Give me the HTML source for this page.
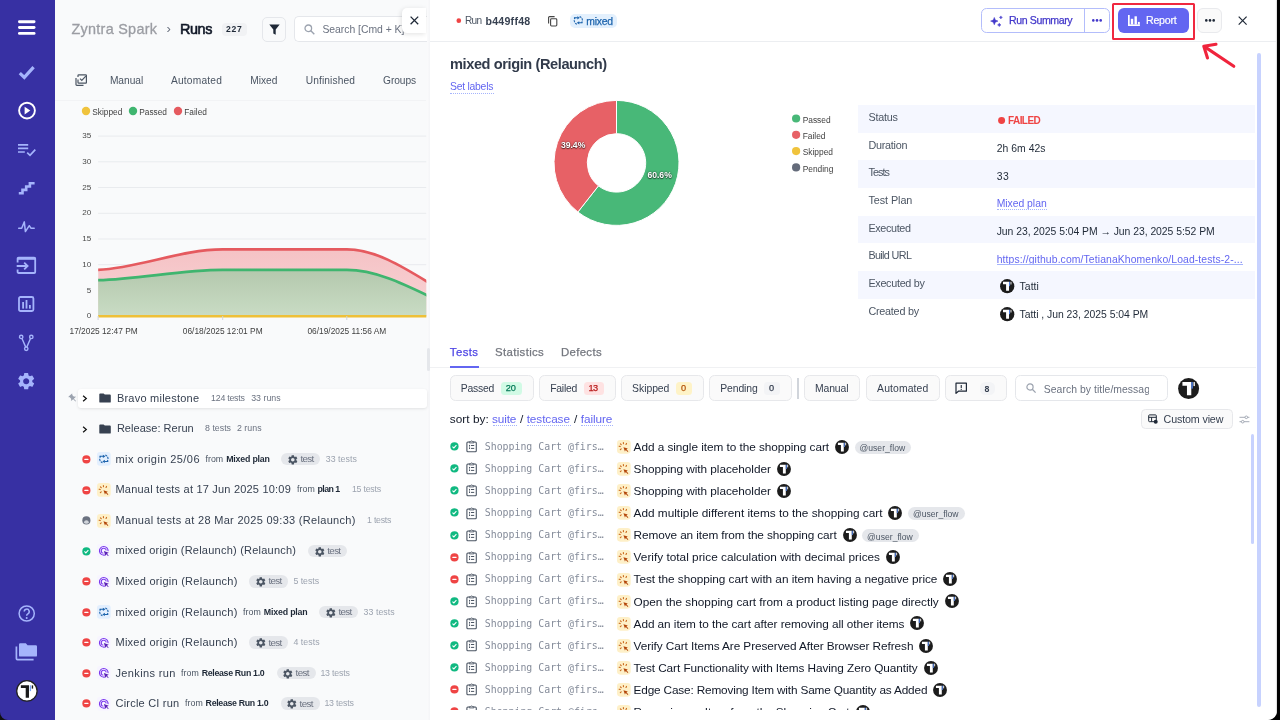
<!DOCTYPE html>
<html lang="en"><head><meta charset="utf-8"><title>Runs</title>
<style>
*{box-sizing:border-box;margin:0;padding:0}
html,body{width:1280px;height:720px;overflow:hidden;background:#fff;font-family:'Liberation Sans', sans-serif;}
#root{position:relative;width:1280px;height:720px;overflow:hidden;will-change:transform;opacity:0.999}
#root div,#root span,#root svg{position:absolute;display:block}
#root span{white-space:nowrap}
#root svg{overflow:visible}
#root span span{position:static;display:inline}
</style></head>
<body><div id="root">
<div style="left:0.00px;top:0.00px;width:55.00px;height:720.00px;background:#3730a3"></div>
<div style="left:55.00px;top:0.00px;width:375.00px;height:720.00px;background:#f9fafb"></div>
<div style="left:430.00px;top:0.00px;width:850.00px;height:720.00px;background:#fff"></div>
<div style="left:1277.20px;top:0.00px;width:2.80px;height:720.00px;background:#000;box-shadow:0 0 1.200px rgba(0,0,0,.8)"></div>
<svg style="left:1268.00px;top:710.00px;" width="12.00" height="10.00" viewBox="0 0 12 10"><path d="M12 0V10H0A9.500 9.500 0 0 0 9.300 0Z" fill="#000"/></svg>
<svg style="left:18.00px;top:20.00px;" width="18.00" height="15.00" viewBox="0 0 18 15"><g fill="#fff"><rect x="0" y="0.3" width="17.5" height="2.9" rx="1.4"/><rect x="0" y="6.100" width="17.5" height="2.9" rx="1.4"/><rect x="0" y="11.900" width="17.5" height="2.9" rx="1.4"/></g></svg>
<svg style="left:18.00px;top:65.00px;" width="18.00" height="15.00" viewBox="0 0 18 15"><path d="M1.8 8.2 L6.3 12.4 L15.6 2.2" fill="none" stroke="#a5b4fc" stroke-width="3.2" stroke-linecap="butt" stroke-linejoin="miter"/></svg>
<svg style="left:16.00px;top:100.00px;" width="22.00" height="22.00" viewBox="0 0 22 22"><circle cx="11" cy="10.6" r="7.9" fill="none" stroke="#fff" stroke-width="1.9"/><path d="M8.6 6.8 L14.3 10.6 L8.6 14.4Z" fill="#fff"/></svg>
<svg style="left:17.00px;top:143.00px;" width="20.00" height="14.00" viewBox="0 0 20 14"><g fill="none" stroke="#a5b4fc" stroke-width="1.7"><path d="M1 1.8H11.200M1 5.400H11.200M1 9H7.800"/><path d="M10.2 9.6 L13 12.3 L18.3 6.6"/></g></svg>
<svg style="left:18.00px;top:181.00px;" width="18.00" height="14.00" viewBox="0 0 18 14"><path d="M0.8 12.3H4.5V8.9H8.2V5.5H11.9V2.2H16.6" fill="none" stroke="#a5b4fc" stroke-width="2.6"/></svg>
<svg style="left:18.00px;top:220.00px;" width="18.00" height="14.00" viewBox="0 0 18 14"><path d="M0.700 8.200H3.700L6.300 1.900L7.400 11.600L11.300 5.700L12.900 8.200H16.200" fill="none" stroke="#a5b4fc" stroke-width="1.500" stroke-linejoin="round" stroke-linecap="round"/></svg>
<svg style="left:16.00px;top:256.00px;" width="21.00" height="19.00" viewBox="0 0 21 19"><g fill="none" stroke="#a5b4fc" stroke-width="1.800"><path d="M1.600 6.400V2.600A1 1 0 0 1 2.600 1.600H18.200A1 1 0 0 1 19.200 2.600V16A1 1 0 0 1 18.200 17H2.600A1 1 0 0 1 1.600 16V13.400"/><path d="M1.600 2.600H19.200" stroke-width="2.400"/><path d="M0.700 10H11.400M8.200 6.700L11.600 10L8.200 13.300"/></g></svg>
<svg style="left:18.20px;top:296.00px;" width="17.00" height="17.00" viewBox="0 0 17 17"><rect x="1" y="1" width="14.4" height="14" rx="1.5" fill="none" stroke="#a5b4fc" stroke-width="1.8"/><g fill="#a5b4fc"><rect x="4.2" y="6" width="1.8" height="6.6"/><rect x="7.6" y="4" width="1.8" height="8.6"/><rect x="11" y="9" width="1.8" height="3.6"/></g></svg>
<svg style="left:18.00px;top:333.00px;" width="18.00" height="19.00" viewBox="0 0 18 19"><g fill="none" stroke="#a5b4fc" stroke-width="1.400"><circle cx="3.200" cy="3.900" r="1.700"/><circle cx="13.300" cy="3.900" r="1.700"/><circle cx="8.250" cy="15.800" r="1.700"/><path d="M4 5.500L7.700 14.100M12.500 5.500L8.800 14.100"/></g></svg>
<svg style="left:16.40px;top:371.30px;" width="20.40" height="20.40" viewBox="0 0 24 24"><path d="M19.14 12.94c.04-.3.06-.61.06-.94 0-.32-.02-.64-.07-.94l2.03-1.58a.49.49 0 00.12-.61l-1.92-3.32a.488.488 0 00-.59-.22l-2.39.96c-.5-.38-1.03-.7-1.62-.94l-.36-2.54a.484.484 0 00-.48-.41h-3.84c-.24 0-.43.17-.47.41l-.36 2.54c-.59.24-1.13.57-1.62.94l-2.39-.96c-.22-.08-.47 0-.59.22L2.74 8.87c-.12.21-.08.47.12.61l2.03 1.58c-.05.3-.09.63-.09.94s.02.64.07.94l-2.03 1.58a.49.49 0 00-.12.61l1.92 3.32c.12.22.37.29.59.22l2.39-.96c.5.38 1.03.7 1.62.94l.36 2.54c.05.24.24.41.48.41h3.84c.24 0 .44-.17.47-.41l.36-2.54c.59-.24 1.13-.56 1.62-.94l2.39.96c.22.08.47 0 .59-.22l1.92-3.32c.12-.22.07-.47-.12-.61l-2.01-1.58zM12 15.6c-1.98 0-3.6-1.62-3.6-3.6s1.620-3.6 3.6-3.6 3.6 1.62 3.6 3.6-1.62 3.6-3.6 3.6z" fill="#a5b4fc"/></svg>
<svg style="left:17.00px;top:604.00px;" width="20.00" height="20.00" viewBox="0 0 20 20"><circle cx="9.7" cy="9.5" r="7.6" fill="none" stroke="#a5b4fc" stroke-width="1.5"/><path d="M7.2 7.6a2.5 2.5 0 1 1 3.7 2.2c-.8.5-1.2.9-1.2 1.9" fill="none" stroke="#a5b4fc" stroke-width="1.5"/><circle cx="9.7" cy="14" r="1" fill="#a5b4fc"/></svg>
<svg style="left:15.00px;top:642.00px;" width="23.00" height="20.00" viewBox="0 0 23 20"><path d="M5.2 1.2h5.6l1.8 2h8.2a1.2 1.2 0 0 1 1.2 1.2v9a1.2 1.2 0 0 1-1.2 1.2H5.2A1.2 1.2 0 0 1 4 13.400V2.4a1.2 1.2 0 0 1 1.2-1.200z" fill="#a5b4fc"/><path d="M1.400 4.600V16.600a1 1 0 0 0 1 1H18.600" fill="none" stroke="#a5b4fc" stroke-width="1.7"/></svg>
<svg style="left:16.20px;top:680.00px;" width="21.80" height="21.80" viewBox="0 0 22 22"><circle cx="11" cy="11" r="10.300" fill="#fff" stroke="#222" stroke-width="1.300"/><path d="M4.900 5.400H13.100V18H9.800V8H4.900Z" fill="#1a1a1a"/><rect x="13.900" y="5.400" width="1.300" height="5.800" fill="#7aa5f5"/><rect x="15.900" y="5.400" width="1.400" height="3.300" fill="#1a1a1a"/></svg>
<svg style="left:0.00px;top:712.00px;" width="8.00" height="8.00" viewBox="0 0 8 8"><path d="M0 0A8 8 0 0 0 8 8H0Z" fill="#111"/></svg>
<span style="letter-spacing:0.293px;left:71.40px;top:18.90px;font-size:14.4px;line-height:20px;color:#9b9da3;font-weight:400;-webkit-text-stroke:0.300px #9b9da3;">Zyntra Spark</span>
<span style="left:166.40px;top:20.30px;font-size:13px;line-height:18px;color:#6b7280;font-weight:400;">›</span>
<span style="letter-spacing:-0.336px;left:179.90px;top:18.90px;font-size:14.4px;line-height:20px;color:#111827;font-weight:400;-webkit-text-stroke:0.600px #111827;">Runs</span>
<div style="left:221.60px;top:23.40px;width:25.70px;height:12.20px;background:#f1f2f4;border-radius:4px"></div>
<span style="letter-spacing:0.628px;left:226.10px;top:23.40px;font-size:8.6px;line-height:12px;color:#1f2937;font-weight:700;">227</span>
<div style="left:261.50px;top:16.90px;width:24.80px;height:24.80px;background:#f9fafb;border:1px solid #e5e7eb;border-radius:5px"></div>
<svg style="left:268.50px;top:23.50px;" width="11.00" height="12.00" viewBox="0 0 11 12"><path d="M0.300 0.500H10.700L6.700 5.600V10.800L4.300 9.600V5.600Z" fill="#1f2937"/></svg>
<div style="left:294.30px;top:16.30px;width:132.40px;height:26.20px;background:#fff;border:1px solid #e5e7eb;border-right:none;border-radius:5px 0 0 5px"></div>
<svg style="left:304.00px;top:23.50px;" width="11.00" height="11.00" viewBox="0 0 11 11"><circle cx="4.300" cy="4.300" r="3.300" fill="none" stroke="#9ca3af" stroke-width="1.300"/><path d="M6.800 6.800L10.300 10.300" stroke="#9ca3af" stroke-width="1.400"/></svg>
<span style="letter-spacing:-0.020px;left:322.40px;top:21.90px;font-size:10.4px;line-height:15px;color:#6b7280;font-weight:400;">Search [Cmd + K]</span>
<div style="left:401.70px;top:8.30px;width:24.60px;height:24.60px;background:#fff;border-radius:5px 0 0 5px;box-shadow:-1px 1px 5px rgba(0,0,0,.12)"></div>
<svg style="left:409.50px;top:16.10px;" width="9.00" height="9.00" viewBox="0 0 9 9"><path d="M0.600 0.600L8.200 8.200M8.200 0.600L0.600 8.200" stroke="#1f2937" stroke-width="1.300" fill="none"/></svg>
<div style="left:426.50px;top:0.00px;width:3.50px;height:720.00px;background:linear-gradient(90deg,#fbfbfc,#f4f5f7)"></div>
<svg style="left:74.60px;top:74.20px;" width="13.00" height="13.00" viewBox="0 0 13 13"><g fill="none" stroke="#4b5563" stroke-width="1.200"><path d="M3 3V1.600A0.800 0.800 0 0 1 3.800 0.800H10.600A0.800 0.800 0 0 1 11.400 1.600V8.400A0.800 0.800 0 0 1 10.600 9.200H3.800A0.800 0.800 0 0 1 3 8.400V5.500"/><path d="M1 4V10.600A0.800 0.800 0 0 0 1.800 11.400H8.500"/><path d="M5 4.700L6.800 6.500L10.800 2.200"/></g></svg>
<span style="letter-spacing:-0.004px;left:109.90px;top:73.60px;font-size:10.2px;line-height:14px;color:#4b5563;font-weight:400;">Manual</span>
<span style="letter-spacing:0.215px;left:170.90px;top:73.60px;font-size:10.2px;line-height:14px;color:#4b5563;font-weight:400;">Automated</span>
<span style="letter-spacing:0.003px;left:250.20px;top:73.60px;font-size:10.2px;line-height:14px;color:#4b5563;font-weight:400;">Mixed</span>
<span style="letter-spacing:0.118px;left:305.70px;top:73.60px;font-size:10.2px;line-height:14px;color:#4b5563;font-weight:400;">Unfinished</span>
<span style="letter-spacing:-0.044px;left:383.00px;top:73.60px;font-size:10.2px;line-height:14px;color:#4b5563;font-weight:400;">Groups</span>
<div style="left:55.00px;top:100.00px;width:371.30px;height:1.00px;background:#f2f3f5"></div>
<svg style="left:70.00px;top:0.00px;font-family:'Liberation Sans', sans-serif" width="357.00" height="345.00" viewBox="0 0 357 345"><line x1="28.1" x2="356.200" y1="316.2" y2="316.2" stroke="#e9ebee" stroke-width="1"/><text x="21.200" y="318.3" text-anchor="end" font-size="8.100" fill="#4b4b4b">0</text><line x1="28.1" x2="356.200" y1="290.5" y2="290.5" stroke="#e9ebee" stroke-width="1"/><text x="21.200" y="292.6" text-anchor="end" font-size="8.100" fill="#4b4b4b">5</text><line x1="28.1" x2="356.200" y1="264.7" y2="264.7" stroke="#e9ebee" stroke-width="1"/><text x="21.200" y="266.8" text-anchor="end" font-size="8.100" fill="#4b4b4b">10</text><line x1="28.1" x2="356.200" y1="239.0" y2="239.0" stroke="#e9ebee" stroke-width="1"/><text x="21.200" y="241.1" text-anchor="end" font-size="8.100" fill="#4b4b4b">15</text><line x1="28.1" x2="356.200" y1="213.3" y2="213.3" stroke="#e9ebee" stroke-width="1"/><text x="21.200" y="215.4" text-anchor="end" font-size="8.100" fill="#4b4b4b">20</text><line x1="28.1" x2="356.200" y1="187.5" y2="187.5" stroke="#e9ebee" stroke-width="1"/><text x="21.200" y="189.6" text-anchor="end" font-size="8.100" fill="#4b4b4b">25</text><line x1="28.1" x2="356.200" y1="161.8" y2="161.8" stroke="#e9ebee" stroke-width="1"/><text x="21.200" y="163.9" text-anchor="end" font-size="8.100" fill="#4b4b4b">30</text><line x1="28.1" x2="356.200" y1="136.1" y2="136.1" stroke="#e9ebee" stroke-width="1"/><text x="21.200" y="138.2" text-anchor="end" font-size="8.100" fill="#4b4b4b">35</text><defs><linearGradient id="gg" x1="0" y1="0" x2="0" y2="1"><stop offset="0" stop-color="#b4c8ad"/><stop offset="1" stop-color="#c9dcc4"/></linearGradient><linearGradient id="rg" x1="0" y1="0" x2="0" y2="1"><stop offset="0" stop-color="#f5c2c5"/><stop offset="1" stop-color="#f8d4d6"/></linearGradient><clipPath id="cc"><rect x="28.100" y="100" width="328.200" height="230"/></clipPath><clipPath id="lc"><rect x="0" y="320" width="357" height="20"/></clipPath></defs><g clip-path="url(#cc)"><path d="M28.1 269.9 C69.5 267.8 111.3 249.3 152.7 249.3 L276.8 249.3 C318.2 249.3 359.6 287.4 401.0 306.4 L401.0 316.2 L28.1 316.2Z" fill="url(#rg)"/><path d="M28.1 280.2 C69.5 279.1 111.3 269.9 152.7 269.9 L276.8 269.9 C318.2 269.9 359.6 299.7 401.0 314.7 L401.0 316.2 L28.1 316.2Z" fill="url(#gg)"/><path d="M28.1 269.9 C69.5 267.8 111.3 249.3 152.7 249.3 L276.8 249.3 C318.2 249.3 359.6 287.4 401.0 306.4" fill="none" stroke="#e55a5f" stroke-width="2.700"/><path d="M28.1 280.2 C69.5 279.1 111.3 269.9 152.7 269.9 L276.8 269.9 C318.2 269.9 359.6 299.7 401.0 314.7" fill="none" stroke="#3fb56f" stroke-width="2.700"/><path d="M28.1 316.2H357" stroke="#eec038" stroke-width="2.600"/></g><line x1="28.1" x2="28.1" y1="316" y2="320" stroke="#d1d5db" stroke-width="1"/><line x1="152.7" x2="152.7" y1="316" y2="320" stroke="#d1d5db" stroke-width="1"/><line x1="276.8" x2="276.8" y1="316" y2="320" stroke="#d1d5db" stroke-width="1"/><g clip-path="url(#lc)" font-size="8.350" fill="#3f3f3f"><text x="67.7" y="333.500" text-anchor="end">06/17/2025 12:47 PM</text><text x="152.7" y="333.500" text-anchor="middle">06/18/2025 12:01 PM</text><text x="276.8" y="333.500" text-anchor="middle">06/19/2025 11:56 AM</text></g><circle cx="16" cy="111" r="4.200" fill="#f0c33c"/><text x="22.3" y="114.800" font-size="8.300" fill="#3f3f3f">Skipped</text><circle cx="63" cy="111" r="4.200" fill="#3fb56f"/><text x="69.3" y="114.800" font-size="8.300" fill="#3f3f3f">Passed</text><circle cx="108" cy="111" r="4.200" fill="#e55a5f"/><text x="114.3" y="114.800" font-size="8.300" fill="#3f3f3f">Failed</text></svg>
<div style="left:427.20px;top:348.00px;width:2.60px;height:23.00px;background:#e5e7eb;border-radius:2px"></div>
<div style="left:78.10px;top:388.80px;width:348.60px;height:19.00px;background:#fff;border-radius:3px;box-shadow:0 1px 3px rgba(0,0,0,.10)"></div>
<svg style="left:67.80px;top:392.70px;" width="10.00" height="10.60" viewBox="0 0 24 24"><g transform="rotate(-42 12 12)"><path d="M16 9V4h1c.55 0 1-.45 1-1s-.45-1-1-1H7c-.55 0-1 .45-1 1s.45 1 1 1h1v5c0 1.660-1.340 3-3 3v2h5.970v7l1 1 1-1v-7H19v-2c-1.660 0-3-1.340-3-3z" fill="#9ca3af"/></g></svg>
<svg style="left:82.40px;top:395.40px;" width="6.00" height="7.00" viewBox="0 0 6 7"><path d="M1.100 0.800L4.300 3.500L1.100 6.200" fill="none" stroke="#111" stroke-width="1.250"/></svg>
<svg style="left:98.60px;top:392.90px;" width="12.00" height="10.00" viewBox="0 0 12 10"><path d="M0.300 1.300A0.900 0.900 0 0 1 1.200 0.400H4.600L5.800 1.600H10.900A0.900 0.900 0 0 1 11.800 2.500V8.700A0.900 0.900 0 0 1 10.900 9.600H1.200A0.900 0.900 0 0 1 0.300 8.700Z" fill="#374151"/></svg>
<span style="letter-spacing:0.238px;left:116.90px;top:390.50px;font-size:11px;line-height:15px;color:#374151;font-weight:400;">Bravo milestone</span>
<span style="letter-spacing:-0.238px;left:211.10px;top:391.70px;font-size:8.8px;line-height:12px;color:#6b7280;font-weight:400;">124 tests</span>
<span style="letter-spacing:0.009px;left:251.20px;top:391.70px;font-size:8.8px;line-height:12px;color:#6b7280;font-weight:400;">33 runs</span>
<svg style="left:82.40px;top:426.00px;" width="6.00" height="7.00" viewBox="0 0 6 7"><path d="M1.100 0.800L4.300 3.500L1.100 6.200" fill="none" stroke="#111" stroke-width="1.250"/></svg>
<svg style="left:98.60px;top:423.50px;" width="12.00" height="10.00" viewBox="0 0 12 10"><path d="M0.300 1.300A0.900 0.900 0 0 1 1.200 0.400H4.600L5.800 1.600H10.900A0.900 0.900 0 0 1 11.800 2.500V8.700A0.900 0.900 0 0 1 10.900 9.600H1.200A0.900 0.900 0 0 1 0.300 8.700Z" fill="#374151"/></svg>
<span style="letter-spacing:0.028px;left:116.90px;top:421.10px;font-size:11px;line-height:15px;color:#374151;font-weight:400;">Release: Rerun</span>
<span style="letter-spacing:-0.004px;left:205.10px;top:422.30px;font-size:8.8px;line-height:12px;color:#6b7280;font-weight:400;">8 tests</span>
<span style="letter-spacing:0.049px;left:236.90px;top:422.30px;font-size:8.8px;line-height:12px;color:#6b7280;font-weight:400;">2 runs</span>
<svg style="left:81.50px;top:455.00px;" width="8.80" height="8.80" viewBox="-0.400 -0.400 10.800 10.800"><circle cx="5" cy="5" r="5" fill="#ef4444"/><rect x="2.400" y="4.200" width="5.200" height="1.600" rx="0.500" fill="#fff"/></svg>
<svg style="left:96.60px;top:452.43px;" width="13.75" height="13.75" viewBox="0 0 14 14"><rect width="14" height="14" rx="3" fill="#e3effe"/><g fill="none" stroke="#1d64ad" stroke-width="1.100"><path d="M8.450 3A4.250 4.250 0 0 1 10.260 9.730M5.550 11A4.250 4.250 0 0 1 3.740 4.270" stroke-dasharray="2.100 0.900"/><path d="M2.500 4.400H6.400M11.500 9.600H7.600"/></g><path d="M6 2.700L8.600 4.400L6 6.100Z" fill="#1d64ad"/><path d="M8 7.900L5.400 9.600L8 11.300Z" fill="#1d64ad"/></svg>
<span style="letter-spacing:0.423px;left:115.50px;top:451.70px;font-size:11px;line-height:15px;color:#374151;font-weight:400;">mix origin 25/06</span>
<span style="letter-spacing:0.064px;left:205.40px;top:452.70px;font-size:8.8px;line-height:12px;color:#4b5563;font-weight:400;">from</span>
<span style="letter-spacing:-0.197px;left:226.20px;top:452.70px;font-size:8.8px;line-height:12px;color:#1f2937;font-weight:700;">Mixed plan</span>
<div style="left:281.30px;top:452.90px;width:39.00px;height:12.60px;background:#e5e7eb;border-radius:6.300px"></div>
<svg style="left:286.80px;top:453.90px;" width="11.60" height="11.60" viewBox="0 0 24 24"><path d="M19.14 12.94c.04-.3.06-.61.06-.94 0-.32-.02-.64-.07-.94l2.03-1.58a.49.49 0 00.12-.61l-1.92-3.32a.488.488 0 00-.59-.22l-2.39.96c-.5-.38-1.03-.7-1.62-.94l-.36-2.54a.484.484 0 00-.48-.41h-3.84c-.24 0-.43.17-.47.41l-.36 2.54c-.59.24-1.13.57-1.62.94l-2.39-.96c-.22-.08-.47 0-.59.22L2.74 8.87c-.12.21-.08.47.12.61l2.03 1.58c-.05.3-.09.63-.09.94s.02.64.07.94l-2.03 1.58a.49.49 0 00-.12.61l1.92 3.32c.12.22.37.29.59.22l2.39-.96c.5.38 1.03.7 1.62.94l.36 2.54c.05.24.24.41.48.41h3.84c.24 0 .44-.17.47-.41l.36-2.54c.59-.24 1.13-.56 1.62-.94l2.39.96c.22.08.47 0 .59-.22l1.92-3.32c.12-.22.07-.47-.12-.61l-2.01-1.58zM12 15.6c-1.98 0-3.6-1.62-3.6-3.6s1.620-3.6 3.6-3.6 3.6 1.62 3.6 3.6-1.62 3.6-3.6 3.6z" fill="#4b5563"/></svg>
<span style="letter-spacing:-0.666px;left:300.40px;top:452.20px;font-size:9.8px;line-height:14px;color:#6b7280;font-weight:400;">test</span>
<span style="letter-spacing:0.055px;left:325.70px;top:452.70px;font-size:8.8px;line-height:12px;color:#9ca3af;font-weight:400;">33 tests</span>
<svg style="left:81.50px;top:485.50px;" width="8.80" height="8.80" viewBox="-0.400 -0.400 10.800 10.800"><circle cx="5" cy="5" r="5" fill="#ef4444"/><rect x="2.400" y="4.200" width="5.200" height="1.600" rx="0.500" fill="#fff"/></svg>
<svg style="left:96.60px;top:482.93px;" width="13.75" height="13.75" viewBox="0 0 14 14"><rect width="14" height="14" rx="3.400" fill="#fef0c8"/><path d="M6.600 7.300L11 8.800L9.700 9.600L11.600 11.500L10.900 12.200L9 10.300L8.100 11.700Z" fill="#b4480c"/><g stroke="#c96a1e" stroke-width="1.150" stroke-linecap="round"><path d="M6.500 2.500L6.600 3.700M3.500 3.900L4.300 4.800M2.200 6.300L3.300 6.700M3.400 9.800L4.300 9M9.700 3.500L9.200 4.500"/></g></svg>
<span style="letter-spacing:0.203px;left:115.50px;top:482.20px;font-size:11px;line-height:15px;color:#374151;font-weight:400;">Manual tests at 17 Jun 2025 10:09</span>
<span style="letter-spacing:0.064px;left:297.10px;top:483.20px;font-size:8.8px;line-height:12px;color:#4b5563;font-weight:400;">from</span>
<span style="letter-spacing:-0.524px;left:317.40px;top:483.20px;font-size:8.8px;line-height:12px;color:#1f2937;font-weight:700;">plan 1</span>
<span style="letter-spacing:-0.230px;left:351.90px;top:483.20px;font-size:8.8px;line-height:12px;color:#9ca3af;font-weight:400;">15 tests</span>
<svg style="left:81.50px;top:516.10px;" width="8.80" height="8.80" viewBox="-0.400 -0.400 10.800 10.800"><circle cx="5" cy="5" r="5" fill="#6b7280"/><path d="M1.800 7.600A3.300 3.600 0 0 1 8.200 7.600A4.200 4.200 0 0 1 1.800 7.600Z" fill="#d1d5db"/></svg>
<svg style="left:96.60px;top:513.52px;" width="13.75" height="13.75" viewBox="0 0 14 14"><rect width="14" height="14" rx="3.400" fill="#fef0c8"/><path d="M6.600 7.300L11 8.800L9.700 9.600L11.600 11.500L10.900 12.200L9 10.300L8.100 11.700Z" fill="#b4480c"/><g stroke="#c96a1e" stroke-width="1.150" stroke-linecap="round"><path d="M6.500 2.500L6.600 3.700M3.500 3.900L4.300 4.800M2.200 6.300L3.300 6.700M3.400 9.800L4.300 9M9.700 3.500L9.200 4.500"/></g></svg>
<span style="letter-spacing:0.303px;left:115.50px;top:512.80px;font-size:11px;line-height:15px;color:#374151;font-weight:400;">Manual tests at 28 Mar 2025 09:33 (Relaunch)</span>
<span style="letter-spacing:-0.270px;left:367.10px;top:513.80px;font-size:8.8px;line-height:12px;color:#9ca3af;font-weight:400;">1 tests</span>
<svg style="left:81.50px;top:546.70px;" width="8.80" height="8.80" viewBox="-0.400 -0.400 10.800 10.800"><circle cx="5" cy="5" r="5" fill="#10b981"/><path d="M2.600 5.100L4.300 6.800L7.400 3.500" fill="none" stroke="#fff" stroke-width="1.300"/></svg>
<svg style="left:96.60px;top:544.12px;" width="13.75" height="13.75" viewBox="0 0 14 14"><rect width="14" height="14" rx="3" fill="#f7f5ff"/><g fill="none" stroke="#7c3aed" stroke-width="1.150"><path d="M8.040 11.150A4.400 4.400 0 1 1 11.280 7.280"/><path d="M6.450 9.460A2.600 2.600 0 1 1 9.460 6.450"/></g><path d="M7 7L12 8.900L10.100 9.800L11.900 11.700L11.200 12.300L9.400 10.400L8.600 12.200Z" fill="#5b21b6"/></svg>
<span style="letter-spacing:0.226px;left:115.50px;top:543.40px;font-size:11px;line-height:15px;color:#374151;font-weight:400;">mixed origin (Relaunch) (Relaunch)</span>
<div style="left:308.20px;top:544.60px;width:39.00px;height:12.60px;background:#e5e7eb;border-radius:6.300px"></div>
<svg style="left:313.70px;top:545.60px;" width="11.60" height="11.60" viewBox="0 0 24 24"><path d="M19.14 12.94c.04-.3.06-.61.06-.94 0-.32-.02-.64-.07-.94l2.03-1.58a.49.49 0 00.12-.61l-1.92-3.32a.488.488 0 00-.59-.22l-2.39.96c-.5-.38-1.03-.7-1.62-.94l-.36-2.54a.484.484 0 00-.48-.41h-3.84c-.24 0-.43.17-.47.41l-.36 2.54c-.59.24-1.13.57-1.62.94l-2.39-.96c-.22-.08-.47 0-.59.22L2.74 8.87c-.12.21-.08.47.12.61l2.03 1.58c-.05.3-.09.63-.09.94s.02.64.07.94l-2.03 1.58a.49.49 0 00-.12.61l1.92 3.32c.12.22.37.29.59.22l2.39-.96c.5.38 1.03.7 1.62.94l.36 2.54c.05.24.24.41.48.41h3.84c.24 0 .44-.17.47-.41l.36-2.54c.59-.24 1.13-.56 1.62-.94l2.39.96c.22.08.47 0 .59-.22l1.92-3.32c.12-.22.07-.47-.12-.61l-2.01-1.58zM12 15.6c-1.98 0-3.6-1.62-3.6-3.6s1.620-3.6 3.6-3.6 3.6 1.62 3.6 3.6-1.62 3.6-3.6 3.6z" fill="#4b5563"/></svg>
<span style="letter-spacing:-0.666px;left:327.30px;top:543.90px;font-size:9.8px;line-height:14px;color:#6b7280;font-weight:400;">test</span>
<svg style="left:81.50px;top:577.20px;" width="8.80" height="8.80" viewBox="-0.400 -0.400 10.800 10.800"><circle cx="5" cy="5" r="5" fill="#ef4444"/><rect x="2.400" y="4.200" width="5.200" height="1.600" rx="0.500" fill="#fff"/></svg>
<svg style="left:96.60px;top:574.62px;" width="13.75" height="13.75" viewBox="0 0 14 14"><rect width="14" height="14" rx="3" fill="#f7f5ff"/><g fill="none" stroke="#7c3aed" stroke-width="1.150"><path d="M8.040 11.150A4.400 4.400 0 1 1 11.280 7.280"/><path d="M6.450 9.460A2.600 2.600 0 1 1 9.460 6.450"/></g><path d="M7 7L12 8.900L10.100 9.800L11.900 11.700L11.200 12.300L9.400 10.400L8.600 12.200Z" fill="#5b21b6"/></svg>
<span style="letter-spacing:0.256px;left:115.50px;top:573.90px;font-size:11px;line-height:15px;color:#374151;font-weight:400;">Mixed origin (Relaunch)</span>
<div style="left:249.30px;top:575.10px;width:39.00px;height:12.60px;background:#e5e7eb;border-radius:6.300px"></div>
<svg style="left:254.80px;top:576.10px;" width="11.60" height="11.60" viewBox="0 0 24 24"><path d="M19.14 12.94c.04-.3.06-.61.06-.94 0-.32-.02-.64-.07-.94l2.03-1.58a.49.49 0 00.12-.61l-1.92-3.32a.488.488 0 00-.59-.22l-2.39.96c-.5-.38-1.03-.7-1.62-.94l-.36-2.54a.484.484 0 00-.48-.41h-3.84c-.24 0-.43.17-.47.41l-.36 2.54c-.59.24-1.13.57-1.62.94l-2.39-.96c-.22-.08-.47 0-.59.22L2.74 8.87c-.12.21-.08.47.12.61l2.03 1.58c-.05.3-.09.63-.09.94s.02.64.07.94l-2.03 1.58a.49.49 0 00-.12.61l1.92 3.32c.12.22.37.29.59.22l2.39-.96c.5.38 1.03.7 1.62.94l.36 2.54c.05.24.24.41.48.41h3.84c.24 0 .44-.17.47-.41l.36-2.54c.59-.24 1.13-.56 1.62-.94l2.39.96c.22.08.47 0 .59-.22l1.92-3.32c.12-.22.07-.47-.12-.61l-2.01-1.58zM12 15.6c-1.98 0-3.6-1.62-3.6-3.6s1.620-3.6 3.6-3.6 3.6 1.62 3.6 3.6-1.62 3.6-3.6 3.6z" fill="#4b5563"/></svg>
<span style="letter-spacing:-0.666px;left:268.40px;top:574.40px;font-size:9.8px;line-height:14px;color:#6b7280;font-weight:400;">test</span>
<span style="letter-spacing:-0.020px;left:293.40px;top:574.90px;font-size:8.8px;line-height:12px;color:#9ca3af;font-weight:400;">5 tests</span>
<svg style="left:81.50px;top:607.80px;" width="8.80" height="8.80" viewBox="-0.400 -0.400 10.800 10.800"><circle cx="5" cy="5" r="5" fill="#ef4444"/><rect x="2.400" y="4.200" width="5.200" height="1.600" rx="0.500" fill="#fff"/></svg>
<svg style="left:96.60px;top:605.23px;" width="13.75" height="13.75" viewBox="0 0 14 14"><rect width="14" height="14" rx="3" fill="#e3effe"/><g fill="none" stroke="#1d64ad" stroke-width="1.100"><path d="M8.450 3A4.250 4.250 0 0 1 10.260 9.730M5.550 11A4.250 4.250 0 0 1 3.740 4.270" stroke-dasharray="2.100 0.900"/><path d="M2.500 4.400H6.400M11.500 9.600H7.600"/></g><path d="M6 2.700L8.600 4.400L6 6.100Z" fill="#1d64ad"/><path d="M8 7.900L5.400 9.600L8 11.300Z" fill="#1d64ad"/></svg>
<span style="letter-spacing:0.256px;left:115.50px;top:604.50px;font-size:11px;line-height:15px;color:#374151;font-weight:400;">mixed origin (Relaunch)</span>
<span style="letter-spacing:0.064px;left:243.10px;top:605.50px;font-size:8.8px;line-height:12px;color:#4b5563;font-weight:400;">from</span>
<span style="letter-spacing:-0.174px;left:263.80px;top:605.50px;font-size:8.8px;line-height:12px;color:#1f2937;font-weight:700;">Mixed plan</span>
<div style="left:319.40px;top:605.70px;width:39.00px;height:12.60px;background:#e5e7eb;border-radius:6.300px"></div>
<svg style="left:324.90px;top:606.70px;" width="11.60" height="11.60" viewBox="0 0 24 24"><path d="M19.14 12.94c.04-.3.06-.61.06-.94 0-.32-.02-.64-.07-.94l2.03-1.58a.49.49 0 00.12-.61l-1.92-3.32a.488.488 0 00-.59-.22l-2.39.96c-.5-.38-1.03-.7-1.62-.94l-.36-2.54a.484.484 0 00-.48-.41h-3.84c-.24 0-.43.17-.47.41l-.36 2.54c-.59.24-1.13.57-1.62.94l-2.39-.96c-.22-.08-.47 0-.59.22L2.74 8.87c-.12.21-.08.47.12.61l2.03 1.58c-.05.3-.09.63-.09.94s.02.64.07.94l-2.03 1.58a.49.49 0 00-.12.61l1.92 3.32c.12.22.37.29.59.22l2.39-.96c.5.38 1.03.7 1.62.94l.36 2.54c.05.24.24.41.48.41h3.84c.24 0 .44-.17.47-.41l.36-2.54c.59-.24 1.13-.56 1.62-.94l2.39.96c.22.08.47 0 .59-.22l1.92-3.32c.12-.22.07-.47-.12-.61l-2.01-1.58zM12 15.6c-1.98 0-3.6-1.62-3.6-3.6s1.620-3.6 3.6-3.6 3.6 1.62 3.6 3.6-1.62 3.6-3.6 3.6z" fill="#4b5563"/></svg>
<span style="letter-spacing:-0.666px;left:338.50px;top:605.00px;font-size:9.8px;line-height:14px;color:#6b7280;font-weight:400;">test</span>
<span style="letter-spacing:0.055px;left:363.50px;top:605.50px;font-size:8.8px;line-height:12px;color:#9ca3af;font-weight:400;">33 tests</span>
<svg style="left:81.50px;top:638.30px;" width="8.80" height="8.80" viewBox="-0.400 -0.400 10.800 10.800"><circle cx="5" cy="5" r="5" fill="#ef4444"/><rect x="2.400" y="4.200" width="5.200" height="1.600" rx="0.500" fill="#fff"/></svg>
<svg style="left:96.60px;top:635.73px;" width="13.75" height="13.75" viewBox="0 0 14 14"><rect width="14" height="14" rx="3" fill="#f7f5ff"/><g fill="none" stroke="#7c3aed" stroke-width="1.150"><path d="M8.040 11.150A4.400 4.400 0 1 1 11.280 7.280"/><path d="M6.450 9.460A2.600 2.600 0 1 1 9.460 6.450"/></g><path d="M7 7L12 8.900L10.100 9.800L11.900 11.700L11.200 12.300L9.400 10.400L8.600 12.200Z" fill="#5b21b6"/></svg>
<span style="letter-spacing:0.256px;left:115.50px;top:635.00px;font-size:11px;line-height:15px;color:#374151;font-weight:400;">Mixed origin (Relaunch)</span>
<div style="left:249.30px;top:636.20px;width:39.00px;height:12.60px;background:#e5e7eb;border-radius:6.300px"></div>
<svg style="left:254.80px;top:637.20px;" width="11.60" height="11.60" viewBox="0 0 24 24"><path d="M19.14 12.94c.04-.3.06-.61.06-.94 0-.32-.02-.64-.07-.94l2.03-1.58a.49.49 0 00.12-.61l-1.92-3.32a.488.488 0 00-.59-.22l-2.39.96c-.5-.38-1.03-.7-1.62-.94l-.36-2.54a.484.484 0 00-.48-.41h-3.84c-.24 0-.43.17-.47.41l-.36 2.54c-.59.24-1.13.57-1.62.94l-2.39-.96c-.22-.08-.47 0-.59.22L2.74 8.87c-.12.21-.08.47.12.61l2.03 1.58c-.05.3-.09.63-.09.94s.02.64.07.94l-2.03 1.58a.49.49 0 00-.12.61l1.92 3.32c.12.22.37.29.59.22l2.39-.96c.5.38 1.03.7 1.62.94l.36 2.54c.05.24.24.41.48.41h3.84c.24 0 .44-.17.47-.41l.36-2.54c.59-.24 1.13-.56 1.62-.94l2.39.96c.22.08.47 0 .59-.22l1.92-3.32c.12-.22.07-.47-.12-.61l-2.01-1.58zM12 15.6c-1.98 0-3.6-1.62-3.6-3.6s1.620-3.6 3.6-3.6 3.6 1.62 3.6 3.6-1.62 3.6-3.6 3.6z" fill="#4b5563"/></svg>
<span style="letter-spacing:-0.666px;left:268.40px;top:635.50px;font-size:9.8px;line-height:14px;color:#6b7280;font-weight:400;">test</span>
<span style="letter-spacing:0.046px;left:293.40px;top:636.00px;font-size:8.8px;line-height:12px;color:#9ca3af;font-weight:400;">4 tests</span>
<svg style="left:81.50px;top:668.90px;" width="8.80" height="8.80" viewBox="-0.400 -0.400 10.800 10.800"><circle cx="5" cy="5" r="5" fill="#ef4444"/><rect x="2.400" y="4.200" width="5.200" height="1.600" rx="0.500" fill="#fff"/></svg>
<svg style="left:96.60px;top:666.33px;" width="13.75" height="13.75" viewBox="0 0 14 14"><rect width="14" height="14" rx="3" fill="#f7f5ff"/><g fill="none" stroke="#7c3aed" stroke-width="1.150"><path d="M8.040 11.150A4.400 4.400 0 1 1 11.280 7.280"/><path d="M6.450 9.460A2.600 2.600 0 1 1 9.460 6.450"/></g><path d="M7 7L12 8.900L10.100 9.800L11.900 11.700L11.200 12.300L9.400 10.400L8.600 12.200Z" fill="#5b21b6"/></svg>
<span style="letter-spacing:0.353px;left:115.50px;top:665.60px;font-size:11px;line-height:15px;color:#374151;font-weight:400;">Jenkins run</span>
<span style="letter-spacing:0.064px;left:181.10px;top:666.60px;font-size:8.8px;line-height:12px;color:#4b5563;font-weight:400;">from</span>
<span style="letter-spacing:-0.320px;left:201.70px;top:666.60px;font-size:8.8px;line-height:12px;color:#1f2937;font-weight:700;">Release Run 1.0</span>
<div style="left:276.50px;top:666.80px;width:39.00px;height:12.60px;background:#e5e7eb;border-radius:6.300px"></div>
<svg style="left:282.00px;top:667.80px;" width="11.60" height="11.60" viewBox="0 0 24 24"><path d="M19.14 12.94c.04-.3.06-.61.06-.94 0-.32-.02-.64-.07-.94l2.03-1.58a.49.49 0 00.12-.61l-1.92-3.32a.488.488 0 00-.59-.22l-2.39.96c-.5-.38-1.03-.7-1.62-.94l-.36-2.54a.484.484 0 00-.48-.41h-3.84c-.24 0-.43.17-.47.41l-.36 2.54c-.59.24-1.13.57-1.62.94l-2.39-.96c-.22-.08-.47 0-.59.22L2.74 8.87c-.12.21-.08.47.12.61l2.03 1.58c-.05.3-.09.63-.09.94s.02.64.07.94l-2.03 1.58a.49.49 0 00-.12.61l1.92 3.32c.12.22.37.29.59.22l2.39-.96c.5.38 1.03.7 1.62.94l.36 2.54c.05.24.24.41.48.41h3.84c.24 0 .44-.17.47-.41l.36-2.54c.59-.24 1.13-.56 1.62-.94l2.39.96c.22.08.47 0 .59-.22l1.92-3.32c.12-.22.07-.47-.12-.61l-2.01-1.58zM12 15.6c-1.98 0-3.6-1.62-3.6-3.6s1.620-3.6 3.6-3.6 3.6 1.62 3.6 3.6-1.62 3.6-3.6 3.6z" fill="#4b5563"/></svg>
<span style="letter-spacing:-0.666px;left:295.60px;top:666.10px;font-size:9.8px;line-height:14px;color:#6b7280;font-weight:400;">test</span>
<span style="letter-spacing:-0.202px;left:320.40px;top:666.60px;font-size:8.8px;line-height:12px;color:#9ca3af;font-weight:400;">13 tests</span>
<svg style="left:81.50px;top:699.40px;" width="8.80" height="8.80" viewBox="-0.400 -0.400 10.800 10.800"><circle cx="5" cy="5" r="5" fill="#ef4444"/><rect x="2.400" y="4.200" width="5.200" height="1.600" rx="0.500" fill="#fff"/></svg>
<svg style="left:96.60px;top:696.83px;" width="13.75" height="13.75" viewBox="0 0 14 14"><rect width="14" height="14" rx="3" fill="#f7f5ff"/><g fill="none" stroke="#7c3aed" stroke-width="1.150"><path d="M8.040 11.150A4.400 4.400 0 1 1 11.280 7.280"/><path d="M6.450 9.460A2.600 2.600 0 1 1 9.460 6.450"/></g><path d="M7 7L12 8.900L10.100 9.800L11.900 11.700L11.200 12.300L9.400 10.400L8.600 12.200Z" fill="#5b21b6"/></svg>
<span style="letter-spacing:0.215px;left:115.50px;top:696.10px;font-size:11px;line-height:15px;color:#374151;font-weight:400;">Circle CI run</span>
<span style="letter-spacing:0.064px;left:185.00px;top:697.10px;font-size:8.8px;line-height:12px;color:#4b5563;font-weight:400;">from</span>
<span style="letter-spacing:-0.320px;left:205.60px;top:697.10px;font-size:8.8px;line-height:12px;color:#1f2937;font-weight:700;">Release Run 1.0</span>
<div style="left:280.50px;top:697.30px;width:39.00px;height:12.60px;background:#e5e7eb;border-radius:6.300px"></div>
<svg style="left:286.00px;top:698.30px;" width="11.60" height="11.60" viewBox="0 0 24 24"><path d="M19.14 12.94c.04-.3.06-.61.06-.94 0-.32-.02-.64-.07-.94l2.03-1.58a.49.49 0 00.12-.61l-1.92-3.32a.488.488 0 00-.59-.22l-2.39.96c-.5-.38-1.03-.7-1.62-.94l-.36-2.54a.484.484 0 00-.48-.41h-3.84c-.24 0-.43.17-.47.41l-.36 2.54c-.59.24-1.13.57-1.62.94l-2.39-.96c-.22-.08-.47 0-.59.22L2.74 8.87c-.12.21-.08.47.12.61l2.03 1.58c-.05.3-.09.63-.09.94s.02.64.07.94l-2.03 1.58a.49.49 0 00-.12.61l1.92 3.32c.12.22.37.29.59.22l2.39-.96c.5.38 1.03.7 1.62.94l.36 2.54c.05.24.24.41.48.41h3.84c.24 0 .44-.17.47-.41l.36-2.54c.59-.24 1.13-.56 1.62-.94l2.39.96c.22.08.47 0 .59-.22l1.92-3.32c.12-.22.07-.47-.12-.61l-2.01-1.58zM12 15.6c-1.98 0-3.6-1.62-3.6-3.6s1.620-3.6 3.6-3.6 3.6 1.62 3.6 3.6-1.62 3.6-3.6 3.6z" fill="#4b5563"/></svg>
<span style="letter-spacing:-0.666px;left:299.60px;top:696.60px;font-size:9.8px;line-height:14px;color:#6b7280;font-weight:400;">test</span>
<span style="letter-spacing:-0.202px;left:324.40px;top:697.10px;font-size:8.8px;line-height:12px;color:#9ca3af;font-weight:400;">13 tests</span>
<div style="left:430.00px;top:41.00px;width:846.00px;height:1.00px;background:#eceef1"></div>
<svg style="left:455.60px;top:18.20px;" width="5.60" height="5.60" viewBox="0 0 5.6 5.6"><circle cx="2.800" cy="2.700" r="2.350" fill="#ef4444"/></svg>
<span style="letter-spacing:-0.666px;left:464.90px;top:14.20px;font-size:10.1px;line-height:14px;color:#4b5563;font-weight:400;">Run</span>
<span style="letter-spacing:0.243px;left:485.50px;top:13.70px;font-size:10.6px;line-height:15px;color:#374151;font-weight:700;">b449ff48</span>
<svg style="left:548.00px;top:15.60px;" width="10.00" height="11.00" viewBox="0 0 10 11"><g fill="none" stroke="#444" stroke-width="1.100"><rect x="2.600" y="2.800" width="6.200" height="7.200" rx="0.900"/><path d="M0.600 7.400V1.500A0.900 0.900 0 0 1 1.500 0.600H6.600"/></g></svg>
<div style="left:570.00px;top:14.00px;width:47.00px;height:13.50px;background:#e3f0fd;border-radius:5px"></div>
<svg style="left:572.60px;top:15.20px;" width="10.60" height="10.60" viewBox="1.500 1.500 11 11"><g fill="none" stroke="#1d64ad" stroke-width="1.100"><path d="M8.450 3A4.250 4.250 0 0 1 10.260 9.730M5.550 11A4.250 4.250 0 0 1 3.740 4.270" stroke-dasharray="2.100 0.900"/><path d="M2.500 4.400H6.400M11.500 9.600H7.600"/></g><path d="M6 2.700L8.600 4.400L6 6.100Z" fill="#1d64ad"/><path d="M8 7.900L5.400 9.600L8 11.300Z" fill="#1d64ad"/></svg>
<span style="letter-spacing:-0.230px;left:586.30px;top:13.50px;font-size:10.4px;line-height:15px;color:#1d64ad;font-weight:400;-webkit-text-stroke:0.250px #1d64ad;">mixed</span>
<div style="left:981.20px;top:8.20px;width:128.90px;height:25.30px;background:#fff;border:1px solid #b3bdfb;border-radius:5.500px"></div>
<div style="left:1084.00px;top:8.30px;width:1.00px;height:25.00px;background:#b3bdfb"></div>
<svg style="left:989.50px;top:14.50px;" width="13.00" height="13.00" viewBox="0 0 13 13"><g fill="#4338ca" stroke="#4338ca" stroke-width="0.500" stroke-linejoin="round"><path d="M4.300 2.400L5.350 5.050L8 6.100L5.350 7.150L4.300 9.800L3.250 7.150L0.600 6.100L3.250 5.050Z"/><path d="M10.900 0.900L11.350 1.950L12.400 2.400L11.350 2.850L10.900 3.900L10.450 2.850L9.400 2.400L10.450 1.950Z"/><path d="M9.250 8.200L9.800 9.350L10.950 9.900L9.800 10.450L9.250 11.600L8.700 10.450L7.550 9.900L8.700 9.350Z"/></g></svg>
<span style="letter-spacing:-0.420px;left:1009.10px;top:12.90px;font-size:10.6px;line-height:15px;color:#4338ca;font-weight:400;-webkit-text-stroke:0.25px #4338ca;">Run Summary</span>
<svg style="left:1092.30px;top:19.10px;" width="10.00" height="3.00" viewBox="0 0 10 3"><g fill="#4338ca"><circle cx="1.300" cy="1.400" r="1.300"/><circle cx="5" cy="1.400" r="1.300"/><circle cx="8.700" cy="1.400" r="1.300"/></g></svg>
<div style="left:1117.90px;top:8.20px;width:71.20px;height:25.20px;background:#6366f1;border-radius:6px"></div>
<svg style="left:1128.00px;top:15.00px;" width="12.00" height="11.00" viewBox="0 0 12 11"><g fill="#fff"><rect x="0" y="0" width="1.700" height="11"/><rect x="0" y="9.400" width="11.900" height="1.600"/><rect x="2.800" y="3.800" width="2.400" height="5.700"/><rect x="6.500" y="1.300" width="2.400" height="8.200"/><rect x="9.900" y="6.900" width="1.900" height="2.600"/></g></svg>
<span style="letter-spacing:-0.259px;left:1146.10px;top:12.90px;font-size:10.6px;line-height:15px;color:#fff;font-weight:400;-webkit-text-stroke:0.2px #fff;">Report</span>
<div style="left:1197.30px;top:8.10px;width:24.80px;height:25.40px;background:#fafafa;border:1px solid #e9eaed;border-radius:6px"></div>
<svg style="left:1204.60px;top:19.10px;" width="10.00" height="3.00" viewBox="0 0 10 3"><g fill="#1f2937"><circle cx="1.300" cy="1.400" r="1.300"/><circle cx="5" cy="1.400" r="1.300"/><circle cx="8.700" cy="1.400" r="1.300"/></g></svg>
<svg style="left:1238.30px;top:15.80px;" width="9.50" height="9.50" viewBox="0 0 9.5 9.5"><path d="M0.700 0.700L8.600 8.600M8.600 0.700L0.700 8.600" stroke="#1f2937" stroke-width="1.200" fill="none"/></svg>
<div style="left:1112.20px;top:2.50px;width:83.10px;height:37.40px;border:2.200px solid #f0283f;border-radius:1.500px"></div>
<svg style="left:1198.00px;top:38.00px;" width="42.00" height="34.00" viewBox="0 0 42 34"><g fill="none" stroke="#f0243c" stroke-width="3.100" stroke-linecap="round" stroke-linejoin="round"><path d="M35.800 28.300L6.500 8.600"/><path d="M18 6.200L5.800 8.300L9.500 20"/></g></svg>
<div style="left:1257.40px;top:53.00px;width:3.50px;height:654.00px;background:#c7d2fe;border-radius:2px"></div>
<div style="left:1251.40px;top:434.00px;width:2.80px;height:110.00px;background:#c7d2fe;border-radius:2px"></div>
<span style="letter-spacing:-0.411px;left:450.00px;top:53.80px;font-size:14.6px;line-height:20px;color:#323b4b;font-weight:700;">mixed origin (Relaunch)</span>
<span style="letter-spacing:-0.249px;left:450.00px;top:78.90px;font-size:10.4px;line-height:15px;color:#6366f1;font-weight:400;">Set labels</span>
<div style="left:450.40px;top:93.00px;width:43.60px;height:1.00px;border-top:1px dotted #a5b4fc"></div>
<svg style="left:430.00px;top:90.00px;font-family:'Liberation Sans', sans-serif" width="430.00" height="250.00" viewBox="430 90 430 250"><path d="M616.50 100.40A62.5 62.5 0 1 1 577.88 212.04L598.46 185.86A29.2 29.2 0 1 0 616.50 133.70Z" fill="#48b878" stroke="#fff" stroke-width="1"/><path d="M577.88 212.04A62.5 62.5 0 0 1 616.50 100.40L616.50 133.70A29.2 29.2 0 0 0 598.46 185.86Z" fill="#e76166" stroke="#fff" stroke-width="1"/><g font-size="8.600" font-weight="700" fill="#fff" text-anchor="middle" style="text-shadow:0 0 2px rgba(0,0,0,.75),0 1px 1px rgba(0,0,0,.5)"><text x="659.600" y="178.200">60.6%</text><text x="573.100" y="148.300">39.4%</text></g><circle cx="796.100" cy="118.5" r="4.100" fill="#48b878"/><text x="802.700" y="122.7" font-size="8.400" fill="#3f3f3f">Passed</text><circle cx="796.100" cy="134.8" r="4.100" fill="#e76166"/><text x="802.700" y="139.0" font-size="8.400" fill="#3f3f3f">Failed</text><circle cx="796.100" cy="151.1" r="4.100" fill="#f0c33c"/><text x="802.700" y="155.3" font-size="8.400" fill="#3f3f3f">Skipped</text><circle cx="796.100" cy="167.4" r="4.100" fill="#646b7a"/><text x="802.700" y="171.6" font-size="8.400" fill="#3f3f3f">Pending</text></svg>
<div style="left:858.00px;top:105.00px;width:396.80px;height:27.65px;background:#f5f7ff"></div>
<span style="letter-spacing:-0.202px;left:868.40px;top:110.00px;font-size:10.8px;line-height:15px;color:#4b5563;font-weight:400;">Status</span>
<span style="letter-spacing:-0.259px;left:868.40px;top:137.65px;font-size:10.8px;line-height:15px;color:#4b5563;font-weight:400;">Duration</span>
<div style="left:858.00px;top:160.30px;width:396.80px;height:27.65px;background:#f5f7ff"></div>
<span style="letter-spacing:-0.901px;left:868.40px;top:165.30px;font-size:10.8px;line-height:15px;color:#4b5563;font-weight:400;">Tests</span>
<span style="letter-spacing:-0.053px;left:868.40px;top:192.95px;font-size:10.8px;line-height:15px;color:#4b5563;font-weight:400;">Test Plan</span>
<div style="left:858.00px;top:215.60px;width:396.80px;height:27.65px;background:#f5f7ff"></div>
<span style="letter-spacing:-0.347px;left:868.40px;top:220.60px;font-size:10.8px;line-height:15px;color:#4b5563;font-weight:400;">Executed</span>
<span style="letter-spacing:-0.639px;left:868.40px;top:248.25px;font-size:10.8px;line-height:15px;color:#4b5563;font-weight:400;">Build URL</span>
<div style="left:858.00px;top:270.90px;width:396.80px;height:27.65px;background:#f5f7ff"></div>
<span style="letter-spacing:-0.292px;left:868.40px;top:275.90px;font-size:10.8px;line-height:15px;color:#4b5563;font-weight:400;">Executed by</span>
<span style="letter-spacing:-0.236px;left:868.40px;top:303.55px;font-size:10.8px;line-height:15px;color:#4b5563;font-weight:400;">Created by</span>
<svg style="left:998.00px;top:116.90px;" width="7.20" height="7.20" viewBox="0 0 7.2 7.2"><circle cx="3.600" cy="3.600" r="3.500" fill="#ef4444"/></svg>
<span style="letter-spacing:-0.592px;left:1008.10px;top:113.90px;font-size:10px;line-height:14px;color:#ef4444;font-weight:700;">FAILED</span>
<span style="letter-spacing:0.034px;left:996.70px;top:141.05px;font-size:10.4px;line-height:15px;color:#1f2937;font-weight:400;">2h 6m 42s</span>
<span style="letter-spacing:0.438px;left:996.70px;top:168.70px;font-size:10.4px;line-height:15px;color:#1f2937;font-weight:400;">33</span>
<span style="letter-spacing:-0.028px;left:996.70px;top:196.35px;font-size:10.4px;line-height:15px;color:#6366f1;font-weight:400;">Mixed plan</span>
<div style="left:997.10px;top:208.85px;width:50.00px;height:1.00px;border-top:1px dotted #a5b4fc"></div>
<span style="letter-spacing:-0.036px;left:996.70px;top:224.00px;font-size:10.4px;line-height:15px;color:#1f2937;font-weight:400;">Jun 23, 2025 5:04 PM → Jun 23, 2025 5:52 PM</span>
<span style="letter-spacing:0.103px;left:996.70px;top:251.65px;font-size:10.4px;line-height:15px;color:#6366f1;font-weight:400;">https://github.com/TetianaKhomenko/Load-tests-2-...</span>
<div style="left:997.10px;top:263.95px;width:246.00px;height:1.00px;background:#a5b4fc"></div>
<svg style="left:999.90px;top:279.30px;" width="14.40" height="14.40" viewBox="0 0 22 22"><circle cx="11" cy="11" r="10.900" fill="#1c1c1c"/><path d="M4.600 4.200H13.800V17.900H9.300V8H4.600Z" fill="#fff"/><rect x="13.800" y="4.200" width="1.600" height="6.800" fill="#4f7fe0"/><rect x="16.100" y="4.200" width="1.400" height="4.200" fill="#fff"/></svg>
<span style="letter-spacing:0.034px;left:1019.60px;top:279.30px;font-size:10.4px;line-height:15px;color:#1f2937;font-weight:400;">Tatti</span>
<svg style="left:999.90px;top:306.95px;" width="14.40" height="14.40" viewBox="0 0 22 22"><circle cx="11" cy="11" r="10.900" fill="#1c1c1c"/><path d="M4.600 4.200H13.800V17.900H9.300V8H4.600Z" fill="#fff"/><rect x="13.800" y="4.200" width="1.600" height="6.800" fill="#4f7fe0"/><rect x="16.100" y="4.200" width="1.400" height="4.200" fill="#fff"/></svg>
<span style="letter-spacing:-0.029px;left:1019.60px;top:306.95px;font-size:10.4px;line-height:15px;color:#1f2937;font-weight:400;">Tatti , Jun 23, 2025 5:04 PM</span>
<div style="left:430.00px;top:367.20px;width:826.00px;height:1.00px;background:#f0f1f3"></div>
<span style="letter-spacing:0.402px;left:449.80px;top:344.20px;font-size:11.4px;line-height:16px;color:#4f46e5;font-weight:400;-webkit-text-stroke:0.250px #4f46e5;">Tests</span>
<div style="left:450.20px;top:366.00px;width:28.80px;height:1.80px;background:#6366f1"></div>
<span style="letter-spacing:0.347px;left:495.10px;top:344.20px;font-size:11.4px;line-height:16px;color:#74777f;font-weight:400;-webkit-text-stroke:0.250px #74777f;">Statistics</span>
<span style="letter-spacing:0.346px;left:560.90px;top:344.20px;font-size:11.4px;line-height:16px;color:#74777f;font-weight:400;-webkit-text-stroke:0.250px #74777f;">Defects</span>
<div style="left:449.90px;top:375.40px;width:83.90px;height:25.30px;background:#fafafa;border:1px solid #e7e8eb;border-radius:5.500px"></div>
<span style="letter-spacing:-0.214px;left:460.80px;top:381.10px;font-size:10.4px;line-height:15px;color:#374151;font-weight:400;">Passed</span>
<div style="left:500.50px;top:382.00px;width:21.50px;height:12.50px;background:#d1fae5;border-radius:3.500px"></div>
<span style="letter-spacing:-0.034px;left:505.70px;top:382.20px;font-size:9.2px;line-height:13px;color:#047857;font-weight:400;-webkit-text-stroke:0.250px #047857;">20</span>
<div style="left:539.20px;top:375.40px;width:76.50px;height:25.30px;background:#fafafa;border:1px solid #e7e8eb;border-radius:5.500px"></div>
<span style="letter-spacing:-0.223px;left:550.20px;top:381.10px;font-size:10.4px;line-height:15px;color:#374151;font-weight:400;">Failed</span>
<div style="left:583.80px;top:382.00px;width:19.90px;height:12.50px;background:#fee2e2;border-radius:3.500px"></div>
<span style="letter-spacing:-0.634px;left:588.60px;top:382.20px;font-size:9.2px;line-height:13px;color:#b91c1c;font-weight:400;-webkit-text-stroke:0.250px #b91c1c;">13</span>
<div style="left:620.80px;top:375.40px;width:83.30px;height:25.30px;background:#fafafa;border:1px solid #e7e8eb;border-radius:5.500px"></div>
<span style="letter-spacing:-0.044px;left:632.10px;top:381.10px;font-size:10.4px;line-height:15px;color:#374151;font-weight:400;">Skipped</span>
<div style="left:675.90px;top:382.00px;width:16.40px;height:12.50px;background:#fef3c7;border-radius:3.500px"></div>
<span style="left:681.00px;top:382.20px;font-size:9.2px;line-height:13px;color:#b45309;font-weight:400;-webkit-text-stroke:0.250px #b45309;">0</span>
<div style="left:708.80px;top:375.40px;width:82.90px;height:25.30px;background:#fafafa;border:1px solid #e7e8eb;border-radius:5.500px"></div>
<span style="letter-spacing:-0.090px;left:720.20px;top:381.10px;font-size:10.4px;line-height:15px;color:#374151;font-weight:400;">Pending</span>
<div style="left:764.20px;top:382.00px;width:15.80px;height:12.50px;background:#f3f4f6;border-radius:3.500px"></div>
<span style="left:769.00px;top:382.20px;font-size:9.2px;line-height:13px;color:#374151;font-weight:400;-webkit-text-stroke:0.250px #374151;">0</span>
<div style="left:797.20px;top:377.70px;width:1.40px;height:21.20px;background:#d1d5db"></div>
<div style="left:803.60px;top:375.40px;width:56.70px;height:25.30px;background:#fafafa;border:1px solid #e7e8eb;border-radius:5.500px"></div>
<span style="letter-spacing:-0.099px;left:814.90px;top:381.10px;font-size:10.4px;line-height:15px;color:#374151;font-weight:400;">Manual</span>
<div style="left:865.80px;top:375.40px;width:74.50px;height:25.30px;background:#fafafa;border:1px solid #e7e8eb;border-radius:5.500px"></div>
<span style="letter-spacing:0.104px;left:877.10px;top:381.10px;font-size:10.4px;line-height:15px;color:#374151;font-weight:400;">Automated</span>
<div style="left:945.40px;top:375.40px;width:61.80px;height:25.30px;background:#fafafa;border:1px solid #e7e8eb;border-radius:5.500px"></div>
<svg style="left:955.00px;top:382.00px;" width="12.50" height="12.50" viewBox="0 0 12.5 12.5"><path d="M1 1.200H11.400V9.200H3.400L1 11.400Z" fill="none" stroke="#1f2937" stroke-width="1.200" stroke-linejoin="round"/><rect x="5.700" y="3" width="1.100" height="3" fill="#1f2937"/><rect x="5.700" y="6.800" width="1.100" height="1.100" fill="#1f2937"/></svg>
<div style="left:979.70px;top:381.60px;width:15.70px;height:13.30px;background:#f3f4f6;border-radius:5.500px"></div>
<span style="left:984.60px;top:382.70px;font-size:8.8px;line-height:12px;color:#374151;font-weight:700;">8</span>
<div style="left:1015.00px;top:375.40px;width:152.60px;height:25.30px;background:#fff;border:1px solid #e5e7eb;border-radius:5.500px"></div>
<svg style="left:1025.50px;top:383.00px;" width="10.50" height="10.50" viewBox="0 0 10.5 10.5"><circle cx="4" cy="4" r="3.100" fill="none" stroke="#9ca3af" stroke-width="1.200"/><path d="M6.300 6.300L9.600 9.600" stroke="#9ca3af" stroke-width="1.300"/></svg>
<div style="left:1043.80px;top:378.00px;width:105.40px;height:20.00px;overflow:hidden"><span style="left:0;top:4.800px;font-size:10.400px;line-height:14px;color:#6b7280;letter-spacing:0.050px">Search by title/message</span></div>
<svg style="left:1178.00px;top:377.80px;" width="21.20" height="21.20" viewBox="0 0 22 22"><circle cx="11" cy="11" r="10.900" fill="#1c1c1c"/><path d="M4.600 4.200H13.800V17.900H9.300V8H4.600Z" fill="#fff"/><rect x="13.800" y="4.200" width="1.600" height="6.800" fill="#4f7fe0"/><rect x="16.100" y="4.200" width="1.400" height="4.200" fill="#fff"/></svg>
<span style="letter-spacing:0.030px;left:449.80px;top:410.90px;font-size:11.8px;line-height:17px;color:#111827;font-weight:400;">sort by:</span>
<span style="letter-spacing:-0.180px;left:492.10px;top:410.90px;font-size:11.8px;line-height:17px;color:#6366f1;font-weight:400;">suite</span>
<div style="left:492.50px;top:424.90px;width:24.40px;height:1.00px;border-top:1px dotted #a5b4fc"></div>
<span style="left:520.00px;top:410.90px;font-size:11.8px;line-height:17px;color:#111827;font-weight:400;">/</span>
<span style="letter-spacing:-0.091px;left:526.70px;top:410.90px;font-size:11.8px;line-height:17px;color:#6366f1;font-weight:400;">testcase</span>
<div style="left:527.10px;top:424.90px;width:43.50px;height:1.00px;border-top:1px dotted #a5b4fc"></div>
<span style="left:574.00px;top:410.90px;font-size:11.8px;line-height:17px;color:#111827;font-weight:400;">/</span>
<span style="letter-spacing:-0.107px;left:580.80px;top:410.90px;font-size:11.8px;line-height:17px;color:#6366f1;font-weight:400;">failure</span>
<div style="left:581.20px;top:424.90px;width:31.70px;height:1.00px;border-top:1px dotted #a5b4fc"></div>
<div style="left:1141.00px;top:409.20px;width:91.70px;height:19.50px;background:#fafafa;border:1px solid #e7e8eb;border-radius:4.500px"></div>
<svg style="left:1148.00px;top:414.30px;" width="10.00" height="10.00" viewBox="0 0 10 10"><g fill="none" stroke="#1f2937" stroke-width="1"><rect x="0.700" y="0.900" width="7.600" height="6.800" rx="0.800"/><path d="M0.700 3.300H8.300M3.600 3.300V7.700"/></g><circle cx="7.700" cy="7.700" r="2" fill="#1f2937"/></svg>
<span style="letter-spacing:-0.137px;left:1163.60px;top:411.80px;font-size:10.7px;line-height:15px;color:#374151;font-weight:400;">Custom view</span>
<svg style="left:1239.40px;top:414.50px;" width="11.00" height="9.00" viewBox="0 0 11 9"><g fill="none" stroke="#9ca3af" stroke-width="0.900"><path d="M0.500 2.300H6M8.600 2.300H10.400M0.500 6.700H2.400M5 6.700H10.400"/><circle cx="7.300" cy="2.300" r="1.300"/><circle cx="3.700" cy="6.700" r="1.300"/></g></svg>
<div style="left:430px;top:430px;width:820px;height:279.800px;overflow:hidden">
<svg style="left:20.45px;top:12.15px;" width="8.90" height="8.90" viewBox="-0.400 -0.400 10.800 10.800"><circle cx="5" cy="5" r="5" fill="#10b981"/><path d="M2.600 5.100L4.300 6.800L7.400 3.500" fill="none" stroke="#fff" stroke-width="1.300"/></svg>
<svg style="left:36.30px;top:10.20px;" width="11.20" height="12.40" viewBox="0 0 11.2 12.4"><rect x="0.900" y="2" width="9.400" height="9.700" rx="1" fill="none" stroke="#4b5563" stroke-width="1.100"/><path d="M3.300 2.900V1.800H4.500A1.150 1.150 0 0 1 6.700 1.800H7.900V2.900Z" fill="#fff" stroke="#4b5563" stroke-width="0.900" stroke-linejoin="round"/><g fill="#4b5563"><rect x="3" y="4.900" width="1.100" height="1.200"/><rect x="5" y="5" width="3.200" height="1"/><rect x="3" y="7.800" width="1.100" height="1.200"/><rect x="5" y="7.900" width="3.200" height="1"/><rect x="3.300" y="6" width="0.500" height="2"/></g></svg>
<span style="letter-spacing:-0.006px;left:54.80px;top:9.70px;font-size:9.9px;line-height:14px;color:#858c9a;font-weight:400;font-family:'DejaVu Sans Mono', 'Liberation Mono', monospace;">Shopping Cart @firs…</span>
<svg style="left:187.10px;top:9.95px;" width="13.70" height="13.70" viewBox="0 0 14 14"><rect width="14" height="14" rx="3.400" fill="#fef0c8"/><path d="M6.600 7.300L11 8.800L9.700 9.600L11.600 11.500L10.900 12.200L9 10.300L8.100 11.700Z" fill="#b4480c"/><g stroke="#c96a1e" stroke-width="1.150" stroke-linecap="round"><path d="M6.500 2.500L6.600 3.700M3.500 3.900L4.300 4.800M2.200 6.300L3.300 6.700M3.400 9.800L4.300 9M9.700 3.500L9.200 4.500"/></g></svg>
<span style="letter-spacing:-0.051px;left:203.60px;top:8.80px;font-size:11.8px;line-height:17px;color:#111827;font-weight:400;">Add a single item to the shopping cart</span>
<svg style="left:405.00px;top:9.60px;" width="14.00" height="14.00" viewBox="0 0 22 22"><circle cx="11" cy="11" r="10.900" fill="#1c1c1c"/><path d="M4.600 4.200H13.800V17.900H9.300V8H4.600Z" fill="#fff"/><rect x="13.800" y="4.200" width="1.600" height="6.800" fill="#4f7fe0"/><rect x="16.100" y="4.200" width="1.400" height="4.200" fill="#fff"/></svg>
<div style="left:424.60px;top:10.80px;width:56.500px;height:13.100px;background:#e5e7eb;border-radius:6.600px"></div>
<span style="letter-spacing:0.020px;left:429.50px;top:12.10px;font-size:8.6px;line-height:12px;color:#4b5563;font-weight:400;">@user_flow</span>
<svg style="left:20.45px;top:34.25px;" width="8.90" height="8.90" viewBox="-0.400 -0.400 10.800 10.800"><circle cx="5" cy="5" r="5" fill="#10b981"/><path d="M2.600 5.100L4.300 6.800L7.400 3.500" fill="none" stroke="#fff" stroke-width="1.300"/></svg>
<svg style="left:36.30px;top:32.30px;" width="11.20" height="12.40" viewBox="0 0 11.2 12.4"><rect x="0.900" y="2" width="9.400" height="9.700" rx="1" fill="none" stroke="#4b5563" stroke-width="1.100"/><path d="M3.300 2.900V1.800H4.500A1.150 1.150 0 0 1 6.700 1.800H7.900V2.900Z" fill="#fff" stroke="#4b5563" stroke-width="0.900" stroke-linejoin="round"/><g fill="#4b5563"><rect x="3" y="4.900" width="1.100" height="1.200"/><rect x="5" y="5" width="3.200" height="1"/><rect x="3" y="7.800" width="1.100" height="1.200"/><rect x="5" y="7.900" width="3.200" height="1"/><rect x="3.300" y="6" width="0.500" height="2"/></g></svg>
<span style="letter-spacing:-0.006px;left:54.80px;top:31.80px;font-size:9.9px;line-height:14px;color:#858c9a;font-weight:400;font-family:'DejaVu Sans Mono', 'Liberation Mono', monospace;">Shopping Cart @firs…</span>
<svg style="left:187.10px;top:32.05px;" width="13.70" height="13.70" viewBox="0 0 14 14"><rect width="14" height="14" rx="3.400" fill="#fef0c8"/><path d="M6.600 7.300L11 8.800L9.700 9.600L11.600 11.500L10.900 12.200L9 10.300L8.100 11.700Z" fill="#b4480c"/><g stroke="#c96a1e" stroke-width="1.150" stroke-linecap="round"><path d="M6.500 2.500L6.600 3.700M3.500 3.900L4.300 4.800M2.200 6.300L3.300 6.700M3.400 9.800L4.300 9M9.700 3.500L9.200 4.500"/></g></svg>
<span style="letter-spacing:-0.045px;left:203.60px;top:30.90px;font-size:11.8px;line-height:17px;color:#111827;font-weight:400;">Shopping with placeholder</span>
<svg style="left:346.80px;top:31.70px;" width="14.00" height="14.00" viewBox="0 0 22 22"><circle cx="11" cy="11" r="10.900" fill="#1c1c1c"/><path d="M4.600 4.200H13.800V17.900H9.300V8H4.600Z" fill="#fff"/><rect x="13.800" y="4.200" width="1.600" height="6.800" fill="#4f7fe0"/><rect x="16.100" y="4.200" width="1.400" height="4.200" fill="#fff"/></svg>
<svg style="left:20.45px;top:56.35px;" width="8.90" height="8.90" viewBox="-0.400 -0.400 10.800 10.800"><circle cx="5" cy="5" r="5" fill="#10b981"/><path d="M2.600 5.100L4.300 6.800L7.400 3.500" fill="none" stroke="#fff" stroke-width="1.300"/></svg>
<svg style="left:36.30px;top:54.40px;" width="11.20" height="12.40" viewBox="0 0 11.2 12.4"><rect x="0.900" y="2" width="9.400" height="9.700" rx="1" fill="none" stroke="#4b5563" stroke-width="1.100"/><path d="M3.300 2.900V1.800H4.500A1.150 1.150 0 0 1 6.700 1.800H7.900V2.900Z" fill="#fff" stroke="#4b5563" stroke-width="0.900" stroke-linejoin="round"/><g fill="#4b5563"><rect x="3" y="4.900" width="1.100" height="1.200"/><rect x="5" y="5" width="3.200" height="1"/><rect x="3" y="7.800" width="1.100" height="1.200"/><rect x="5" y="7.900" width="3.200" height="1"/><rect x="3.300" y="6" width="0.500" height="2"/></g></svg>
<span style="letter-spacing:-0.006px;left:54.80px;top:53.90px;font-size:9.9px;line-height:14px;color:#858c9a;font-weight:400;font-family:'DejaVu Sans Mono', 'Liberation Mono', monospace;">Shopping Cart @firs…</span>
<svg style="left:187.10px;top:54.15px;" width="13.70" height="13.70" viewBox="0 0 14 14"><rect width="14" height="14" rx="3.400" fill="#fef0c8"/><path d="M6.600 7.300L11 8.800L9.700 9.600L11.600 11.500L10.900 12.200L9 10.300L8.100 11.700Z" fill="#b4480c"/><g stroke="#c96a1e" stroke-width="1.150" stroke-linecap="round"><path d="M6.500 2.500L6.600 3.700M3.500 3.900L4.300 4.800M2.200 6.300L3.300 6.700M3.400 9.800L4.300 9M9.700 3.500L9.200 4.500"/></g></svg>
<span style="letter-spacing:-0.045px;left:203.60px;top:53.00px;font-size:11.8px;line-height:17px;color:#111827;font-weight:400;">Shopping with placeholder</span>
<svg style="left:346.80px;top:53.80px;" width="14.00" height="14.00" viewBox="0 0 22 22"><circle cx="11" cy="11" r="10.900" fill="#1c1c1c"/><path d="M4.600 4.200H13.800V17.900H9.300V8H4.600Z" fill="#fff"/><rect x="13.800" y="4.200" width="1.600" height="6.800" fill="#4f7fe0"/><rect x="16.100" y="4.200" width="1.400" height="4.200" fill="#fff"/></svg>
<svg style="left:20.45px;top:78.45px;" width="8.90" height="8.90" viewBox="-0.400 -0.400 10.800 10.800"><circle cx="5" cy="5" r="5" fill="#10b981"/><path d="M2.600 5.100L4.300 6.800L7.400 3.500" fill="none" stroke="#fff" stroke-width="1.300"/></svg>
<svg style="left:36.30px;top:76.50px;" width="11.20" height="12.40" viewBox="0 0 11.2 12.4"><rect x="0.900" y="2" width="9.400" height="9.700" rx="1" fill="none" stroke="#4b5563" stroke-width="1.100"/><path d="M3.300 2.900V1.800H4.500A1.150 1.150 0 0 1 6.700 1.800H7.900V2.900Z" fill="#fff" stroke="#4b5563" stroke-width="0.900" stroke-linejoin="round"/><g fill="#4b5563"><rect x="3" y="4.900" width="1.100" height="1.200"/><rect x="5" y="5" width="3.200" height="1"/><rect x="3" y="7.800" width="1.100" height="1.200"/><rect x="5" y="7.900" width="3.200" height="1"/><rect x="3.300" y="6" width="0.500" height="2"/></g></svg>
<span style="letter-spacing:-0.006px;left:54.80px;top:76.00px;font-size:9.9px;line-height:14px;color:#858c9a;font-weight:400;font-family:'DejaVu Sans Mono', 'Liberation Mono', monospace;">Shopping Cart @firs…</span>
<svg style="left:187.10px;top:76.25px;" width="13.70" height="13.70" viewBox="0 0 14 14"><rect width="14" height="14" rx="3.400" fill="#fef0c8"/><path d="M6.600 7.300L11 8.800L9.700 9.600L11.600 11.500L10.900 12.200L9 10.300L8.100 11.700Z" fill="#b4480c"/><g stroke="#c96a1e" stroke-width="1.150" stroke-linecap="round"><path d="M6.500 2.500L6.600 3.700M3.500 3.900L4.300 4.800M2.200 6.300L3.300 6.700M3.400 9.800L4.300 9M9.700 3.500L9.200 4.500"/></g></svg>
<span style="letter-spacing:-0.001px;left:203.60px;top:75.10px;font-size:11.8px;line-height:17px;color:#111827;font-weight:400;">Add multiple different items to the shopping cart</span>
<svg style="left:458.40px;top:75.90px;" width="14.00" height="14.00" viewBox="0 0 22 22"><circle cx="11" cy="11" r="10.900" fill="#1c1c1c"/><path d="M4.600 4.200H13.800V17.900H9.300V8H4.600Z" fill="#fff"/><rect x="13.800" y="4.200" width="1.600" height="6.800" fill="#4f7fe0"/><rect x="16.100" y="4.200" width="1.400" height="4.200" fill="#fff"/></svg>
<div style="left:478.00px;top:77.10px;width:56.500px;height:13.100px;background:#e5e7eb;border-radius:6.600px"></div>
<span style="letter-spacing:0.020px;left:482.90px;top:78.40px;font-size:8.6px;line-height:12px;color:#4b5563;font-weight:400;">@user_flow</span>
<svg style="left:20.45px;top:100.55px;" width="8.90" height="8.90" viewBox="-0.400 -0.400 10.800 10.800"><circle cx="5" cy="5" r="5" fill="#10b981"/><path d="M2.600 5.100L4.300 6.800L7.400 3.500" fill="none" stroke="#fff" stroke-width="1.300"/></svg>
<svg style="left:36.30px;top:98.60px;" width="11.20" height="12.40" viewBox="0 0 11.2 12.4"><rect x="0.900" y="2" width="9.400" height="9.700" rx="1" fill="none" stroke="#4b5563" stroke-width="1.100"/><path d="M3.300 2.900V1.800H4.500A1.150 1.150 0 0 1 6.700 1.800H7.900V2.900Z" fill="#fff" stroke="#4b5563" stroke-width="0.900" stroke-linejoin="round"/><g fill="#4b5563"><rect x="3" y="4.900" width="1.100" height="1.200"/><rect x="5" y="5" width="3.200" height="1"/><rect x="3" y="7.800" width="1.100" height="1.200"/><rect x="5" y="7.900" width="3.200" height="1"/><rect x="3.300" y="6" width="0.500" height="2"/></g></svg>
<span style="letter-spacing:-0.006px;left:54.80px;top:98.10px;font-size:9.9px;line-height:14px;color:#858c9a;font-weight:400;font-family:'DejaVu Sans Mono', 'Liberation Mono', monospace;">Shopping Cart @firs…</span>
<svg style="left:187.10px;top:98.35px;" width="13.70" height="13.70" viewBox="0 0 14 14"><rect width="14" height="14" rx="3.400" fill="#fef0c8"/><path d="M6.600 7.300L11 8.800L9.700 9.600L11.600 11.500L10.900 12.200L9 10.300L8.100 11.700Z" fill="#b4480c"/><g stroke="#c96a1e" stroke-width="1.150" stroke-linecap="round"><path d="M6.500 2.500L6.600 3.700M3.500 3.900L4.300 4.800M2.200 6.300L3.300 6.700M3.400 9.800L4.300 9M9.700 3.500L9.200 4.500"/></g></svg>
<span style="letter-spacing:-0.096px;left:203.60px;top:97.20px;font-size:11.8px;line-height:17px;color:#111827;font-weight:400;">Remove an item from the shopping cart</span>
<svg style="left:412.60px;top:98.00px;" width="14.00" height="14.00" viewBox="0 0 22 22"><circle cx="11" cy="11" r="10.900" fill="#1c1c1c"/><path d="M4.600 4.200H13.800V17.900H9.300V8H4.600Z" fill="#fff"/><rect x="13.800" y="4.200" width="1.600" height="6.800" fill="#4f7fe0"/><rect x="16.100" y="4.200" width="1.400" height="4.200" fill="#fff"/></svg>
<div style="left:432.20px;top:99.20px;width:56.500px;height:13.100px;background:#e5e7eb;border-radius:6.600px"></div>
<span style="letter-spacing:0.020px;left:437.10px;top:100.50px;font-size:8.6px;line-height:12px;color:#4b5563;font-weight:400;">@user_flow</span>
<svg style="left:20.45px;top:122.65px;" width="8.90" height="8.90" viewBox="-0.400 -0.400 10.800 10.800"><circle cx="5" cy="5" r="5" fill="#ef4444"/><rect x="2.400" y="4.200" width="5.200" height="1.600" rx="0.500" fill="#fff"/></svg>
<svg style="left:36.30px;top:120.70px;" width="11.20" height="12.40" viewBox="0 0 11.2 12.4"><rect x="0.900" y="2" width="9.400" height="9.700" rx="1" fill="none" stroke="#4b5563" stroke-width="1.100"/><path d="M3.300 2.900V1.800H4.500A1.150 1.150 0 0 1 6.700 1.800H7.900V2.900Z" fill="#fff" stroke="#4b5563" stroke-width="0.900" stroke-linejoin="round"/><g fill="#4b5563"><rect x="3" y="4.900" width="1.100" height="1.200"/><rect x="5" y="5" width="3.200" height="1"/><rect x="3" y="7.800" width="1.100" height="1.200"/><rect x="5" y="7.900" width="3.200" height="1"/><rect x="3.300" y="6" width="0.500" height="2"/></g></svg>
<span style="letter-spacing:-0.006px;left:54.80px;top:120.20px;font-size:9.9px;line-height:14px;color:#858c9a;font-weight:400;font-family:'DejaVu Sans Mono', 'Liberation Mono', monospace;">Shopping Cart @firs…</span>
<svg style="left:187.10px;top:120.45px;" width="13.70" height="13.70" viewBox="0 0 14 14"><rect width="14" height="14" rx="3.400" fill="#fef0c8"/><path d="M6.600 7.300L11 8.800L9.700 9.600L11.600 11.500L10.900 12.200L9 10.300L8.100 11.700Z" fill="#b4480c"/><g stroke="#c96a1e" stroke-width="1.150" stroke-linecap="round"><path d="M6.500 2.500L6.600 3.700M3.500 3.900L4.300 4.800M2.200 6.300L3.300 6.700M3.400 9.800L4.300 9M9.700 3.500L9.200 4.500"/></g></svg>
<span style="letter-spacing:0.011px;left:203.60px;top:119.30px;font-size:11.8px;line-height:17px;color:#111827;font-weight:400;">Verify total price calculation with decimal prices</span>
<svg style="left:455.90px;top:120.10px;" width="14.00" height="14.00" viewBox="0 0 22 22"><circle cx="11" cy="11" r="10.900" fill="#1c1c1c"/><path d="M4.600 4.200H13.800V17.900H9.300V8H4.600Z" fill="#fff"/><rect x="13.800" y="4.200" width="1.600" height="6.800" fill="#4f7fe0"/><rect x="16.100" y="4.200" width="1.400" height="4.200" fill="#fff"/></svg>
<svg style="left:20.45px;top:144.75px;" width="8.90" height="8.90" viewBox="-0.400 -0.400 10.800 10.800"><circle cx="5" cy="5" r="5" fill="#ef4444"/><rect x="2.400" y="4.200" width="5.200" height="1.600" rx="0.500" fill="#fff"/></svg>
<svg style="left:36.30px;top:142.80px;" width="11.20" height="12.40" viewBox="0 0 11.2 12.4"><rect x="0.900" y="2" width="9.400" height="9.700" rx="1" fill="none" stroke="#4b5563" stroke-width="1.100"/><path d="M3.300 2.900V1.800H4.500A1.150 1.150 0 0 1 6.700 1.800H7.900V2.900Z" fill="#fff" stroke="#4b5563" stroke-width="0.900" stroke-linejoin="round"/><g fill="#4b5563"><rect x="3" y="4.900" width="1.100" height="1.200"/><rect x="5" y="5" width="3.200" height="1"/><rect x="3" y="7.800" width="1.100" height="1.200"/><rect x="5" y="7.900" width="3.200" height="1"/><rect x="3.300" y="6" width="0.500" height="2"/></g></svg>
<span style="letter-spacing:-0.006px;left:54.80px;top:142.30px;font-size:9.9px;line-height:14px;color:#858c9a;font-weight:400;font-family:'DejaVu Sans Mono', 'Liberation Mono', monospace;">Shopping Cart @firs…</span>
<svg style="left:187.10px;top:142.55px;" width="13.70" height="13.70" viewBox="0 0 14 14"><rect width="14" height="14" rx="3.400" fill="#fef0c8"/><path d="M6.600 7.300L11 8.800L9.700 9.600L11.600 11.500L10.900 12.200L9 10.300L8.100 11.700Z" fill="#b4480c"/><g stroke="#c96a1e" stroke-width="1.150" stroke-linecap="round"><path d="M6.500 2.500L6.600 3.700M3.500 3.900L4.300 4.800M2.200 6.300L3.300 6.700M3.400 9.800L4.300 9M9.700 3.500L9.200 4.500"/></g></svg>
<span style="letter-spacing:-0.042px;left:203.60px;top:141.40px;font-size:11.8px;line-height:17px;color:#111827;font-weight:400;">Test the shopping cart with an item having a negative price</span>
<svg style="left:513.30px;top:142.20px;" width="14.00" height="14.00" viewBox="0 0 22 22"><circle cx="11" cy="11" r="10.900" fill="#1c1c1c"/><path d="M4.600 4.200H13.800V17.900H9.300V8H4.600Z" fill="#fff"/><rect x="13.800" y="4.200" width="1.600" height="6.800" fill="#4f7fe0"/><rect x="16.100" y="4.200" width="1.400" height="4.200" fill="#fff"/></svg>
<svg style="left:20.45px;top:166.85px;" width="8.90" height="8.90" viewBox="-0.400 -0.400 10.800 10.800"><circle cx="5" cy="5" r="5" fill="#10b981"/><path d="M2.600 5.100L4.300 6.800L7.400 3.500" fill="none" stroke="#fff" stroke-width="1.300"/></svg>
<svg style="left:36.30px;top:164.90px;" width="11.20" height="12.40" viewBox="0 0 11.2 12.4"><rect x="0.900" y="2" width="9.400" height="9.700" rx="1" fill="none" stroke="#4b5563" stroke-width="1.100"/><path d="M3.300 2.900V1.800H4.500A1.150 1.150 0 0 1 6.700 1.800H7.900V2.900Z" fill="#fff" stroke="#4b5563" stroke-width="0.900" stroke-linejoin="round"/><g fill="#4b5563"><rect x="3" y="4.900" width="1.100" height="1.200"/><rect x="5" y="5" width="3.200" height="1"/><rect x="3" y="7.800" width="1.100" height="1.200"/><rect x="5" y="7.900" width="3.200" height="1"/><rect x="3.300" y="6" width="0.500" height="2"/></g></svg>
<span style="letter-spacing:-0.006px;left:54.80px;top:164.40px;font-size:9.9px;line-height:14px;color:#858c9a;font-weight:400;font-family:'DejaVu Sans Mono', 'Liberation Mono', monospace;">Shopping Cart @firs…</span>
<svg style="left:187.10px;top:164.65px;" width="13.70" height="13.70" viewBox="0 0 14 14"><rect width="14" height="14" rx="3.400" fill="#fef0c8"/><path d="M6.600 7.300L11 8.800L9.700 9.600L11.600 11.500L10.900 12.200L9 10.300L8.100 11.700Z" fill="#b4480c"/><g stroke="#c96a1e" stroke-width="1.150" stroke-linecap="round"><path d="M6.500 2.500L6.600 3.700M3.500 3.900L4.300 4.800M2.200 6.300L3.300 6.700M3.400 9.800L4.300 9M9.700 3.500L9.200 4.500"/></g></svg>
<span style="letter-spacing:-0.007px;left:203.60px;top:163.50px;font-size:11.8px;line-height:17px;color:#111827;font-weight:400;">Open the shopping cart from a product listing page directly</span>
<svg style="left:514.70px;top:164.30px;" width="14.00" height="14.00" viewBox="0 0 22 22"><circle cx="11" cy="11" r="10.900" fill="#1c1c1c"/><path d="M4.600 4.200H13.800V17.900H9.300V8H4.600Z" fill="#fff"/><rect x="13.800" y="4.200" width="1.600" height="6.800" fill="#4f7fe0"/><rect x="16.100" y="4.200" width="1.400" height="4.200" fill="#fff"/></svg>
<svg style="left:20.45px;top:188.95px;" width="8.90" height="8.90" viewBox="-0.400 -0.400 10.800 10.800"><circle cx="5" cy="5" r="5" fill="#10b981"/><path d="M2.600 5.100L4.300 6.800L7.400 3.500" fill="none" stroke="#fff" stroke-width="1.300"/></svg>
<svg style="left:36.30px;top:187.00px;" width="11.20" height="12.40" viewBox="0 0 11.2 12.4"><rect x="0.900" y="2" width="9.400" height="9.700" rx="1" fill="none" stroke="#4b5563" stroke-width="1.100"/><path d="M3.300 2.900V1.800H4.500A1.150 1.150 0 0 1 6.700 1.800H7.900V2.900Z" fill="#fff" stroke="#4b5563" stroke-width="0.900" stroke-linejoin="round"/><g fill="#4b5563"><rect x="3" y="4.900" width="1.100" height="1.200"/><rect x="5" y="5" width="3.200" height="1"/><rect x="3" y="7.800" width="1.100" height="1.200"/><rect x="5" y="7.900" width="3.200" height="1"/><rect x="3.300" y="6" width="0.500" height="2"/></g></svg>
<span style="letter-spacing:-0.006px;left:54.80px;top:186.50px;font-size:9.9px;line-height:14px;color:#858c9a;font-weight:400;font-family:'DejaVu Sans Mono', 'Liberation Mono', monospace;">Shopping Cart @firs…</span>
<svg style="left:187.10px;top:186.75px;" width="13.70" height="13.70" viewBox="0 0 14 14"><rect width="14" height="14" rx="3.400" fill="#fef0c8"/><path d="M6.600 7.300L11 8.800L9.700 9.600L11.600 11.500L10.900 12.200L9 10.300L8.100 11.700Z" fill="#b4480c"/><g stroke="#c96a1e" stroke-width="1.150" stroke-linecap="round"><path d="M6.500 2.500L6.600 3.700M3.500 3.900L4.300 4.800M2.200 6.300L3.300 6.700M3.400 9.800L4.300 9M9.700 3.500L9.200 4.500"/></g></svg>
<span style="letter-spacing:-0.060px;left:203.60px;top:185.60px;font-size:11.8px;line-height:17px;color:#111827;font-weight:400;">Add an item to the cart after removing all other items</span>
<svg style="left:480.40px;top:186.40px;" width="14.00" height="14.00" viewBox="0 0 22 22"><circle cx="11" cy="11" r="10.900" fill="#1c1c1c"/><path d="M4.600 4.200H13.800V17.900H9.300V8H4.600Z" fill="#fff"/><rect x="13.800" y="4.200" width="1.600" height="6.800" fill="#4f7fe0"/><rect x="16.100" y="4.200" width="1.400" height="4.200" fill="#fff"/></svg>
<svg style="left:20.45px;top:211.05px;" width="8.90" height="8.90" viewBox="-0.400 -0.400 10.800 10.800"><circle cx="5" cy="5" r="5" fill="#10b981"/><path d="M2.600 5.100L4.300 6.800L7.400 3.500" fill="none" stroke="#fff" stroke-width="1.300"/></svg>
<svg style="left:36.30px;top:209.10px;" width="11.20" height="12.40" viewBox="0 0 11.2 12.4"><rect x="0.900" y="2" width="9.400" height="9.700" rx="1" fill="none" stroke="#4b5563" stroke-width="1.100"/><path d="M3.300 2.900V1.800H4.500A1.150 1.150 0 0 1 6.700 1.800H7.900V2.900Z" fill="#fff" stroke="#4b5563" stroke-width="0.900" stroke-linejoin="round"/><g fill="#4b5563"><rect x="3" y="4.900" width="1.100" height="1.200"/><rect x="5" y="5" width="3.200" height="1"/><rect x="3" y="7.800" width="1.100" height="1.200"/><rect x="5" y="7.900" width="3.200" height="1"/><rect x="3.300" y="6" width="0.500" height="2"/></g></svg>
<span style="letter-spacing:-0.006px;left:54.80px;top:208.60px;font-size:9.9px;line-height:14px;color:#858c9a;font-weight:400;font-family:'DejaVu Sans Mono', 'Liberation Mono', monospace;">Shopping Cart @firs…</span>
<svg style="left:187.10px;top:208.85px;" width="13.70" height="13.70" viewBox="0 0 14 14"><rect width="14" height="14" rx="3.400" fill="#fef0c8"/><path d="M6.600 7.300L11 8.800L9.700 9.600L11.600 11.500L10.900 12.200L9 10.300L8.100 11.700Z" fill="#b4480c"/><g stroke="#c96a1e" stroke-width="1.150" stroke-linecap="round"><path d="M6.500 2.500L6.600 3.700M3.500 3.900L4.300 4.800M2.200 6.300L3.300 6.700M3.400 9.800L4.300 9M9.700 3.500L9.200 4.500"/></g></svg>
<span style="letter-spacing:-0.077px;left:203.60px;top:207.70px;font-size:11.8px;line-height:17px;color:#111827;font-weight:400;">Verify Cart Items Are Preserved After Browser Refresh</span>
<svg style="left:489.40px;top:208.50px;" width="14.00" height="14.00" viewBox="0 0 22 22"><circle cx="11" cy="11" r="10.900" fill="#1c1c1c"/><path d="M4.600 4.200H13.800V17.900H9.300V8H4.600Z" fill="#fff"/><rect x="13.800" y="4.200" width="1.600" height="6.800" fill="#4f7fe0"/><rect x="16.100" y="4.200" width="1.400" height="4.200" fill="#fff"/></svg>
<svg style="left:20.45px;top:233.15px;" width="8.90" height="8.90" viewBox="-0.400 -0.400 10.800 10.800"><circle cx="5" cy="5" r="5" fill="#10b981"/><path d="M2.600 5.100L4.300 6.800L7.400 3.500" fill="none" stroke="#fff" stroke-width="1.300"/></svg>
<svg style="left:36.30px;top:231.20px;" width="11.20" height="12.40" viewBox="0 0 11.2 12.4"><rect x="0.900" y="2" width="9.400" height="9.700" rx="1" fill="none" stroke="#4b5563" stroke-width="1.100"/><path d="M3.300 2.900V1.800H4.500A1.150 1.150 0 0 1 6.700 1.800H7.900V2.900Z" fill="#fff" stroke="#4b5563" stroke-width="0.900" stroke-linejoin="round"/><g fill="#4b5563"><rect x="3" y="4.900" width="1.100" height="1.200"/><rect x="5" y="5" width="3.200" height="1"/><rect x="3" y="7.800" width="1.100" height="1.200"/><rect x="5" y="7.900" width="3.200" height="1"/><rect x="3.300" y="6" width="0.500" height="2"/></g></svg>
<span style="letter-spacing:-0.006px;left:54.80px;top:230.70px;font-size:9.9px;line-height:14px;color:#858c9a;font-weight:400;font-family:'DejaVu Sans Mono', 'Liberation Mono', monospace;">Shopping Cart @firs…</span>
<svg style="left:187.10px;top:230.95px;" width="13.70" height="13.70" viewBox="0 0 14 14"><rect width="14" height="14" rx="3.400" fill="#fef0c8"/><path d="M6.600 7.300L11 8.800L9.700 9.600L11.600 11.500L10.900 12.200L9 10.300L8.100 11.700Z" fill="#b4480c"/><g stroke="#c96a1e" stroke-width="1.150" stroke-linecap="round"><path d="M6.500 2.500L6.600 3.700M3.500 3.900L4.300 4.800M2.200 6.300L3.300 6.700M3.400 9.800L4.300 9M9.700 3.500L9.200 4.500"/></g></svg>
<span style="letter-spacing:-0.069px;left:203.60px;top:229.80px;font-size:11.8px;line-height:17px;color:#111827;font-weight:400;">Test Cart Functionality with Items Having Zero Quantity</span>
<svg style="left:493.60px;top:230.60px;" width="14.00" height="14.00" viewBox="0 0 22 22"><circle cx="11" cy="11" r="10.900" fill="#1c1c1c"/><path d="M4.600 4.200H13.800V17.900H9.300V8H4.600Z" fill="#fff"/><rect x="13.800" y="4.200" width="1.600" height="6.800" fill="#4f7fe0"/><rect x="16.100" y="4.200" width="1.400" height="4.200" fill="#fff"/></svg>
<svg style="left:20.45px;top:255.25px;" width="8.90" height="8.90" viewBox="-0.400 -0.400 10.800 10.800"><circle cx="5" cy="5" r="5" fill="#ef4444"/><rect x="2.400" y="4.200" width="5.200" height="1.600" rx="0.500" fill="#fff"/></svg>
<svg style="left:36.30px;top:253.30px;" width="11.20" height="12.40" viewBox="0 0 11.2 12.4"><rect x="0.900" y="2" width="9.400" height="9.700" rx="1" fill="none" stroke="#4b5563" stroke-width="1.100"/><path d="M3.300 2.900V1.800H4.500A1.150 1.150 0 0 1 6.700 1.800H7.900V2.900Z" fill="#fff" stroke="#4b5563" stroke-width="0.900" stroke-linejoin="round"/><g fill="#4b5563"><rect x="3" y="4.900" width="1.100" height="1.200"/><rect x="5" y="5" width="3.200" height="1"/><rect x="3" y="7.800" width="1.100" height="1.200"/><rect x="5" y="7.900" width="3.200" height="1"/><rect x="3.300" y="6" width="0.500" height="2"/></g></svg>
<span style="letter-spacing:-0.006px;left:54.80px;top:252.80px;font-size:9.9px;line-height:14px;color:#858c9a;font-weight:400;font-family:'DejaVu Sans Mono', 'Liberation Mono', monospace;">Shopping Cart @firs…</span>
<svg style="left:187.10px;top:253.05px;" width="13.70" height="13.70" viewBox="0 0 14 14"><rect width="14" height="14" rx="3.400" fill="#fef0c8"/><path d="M6.600 7.300L11 8.800L9.700 9.600L11.600 11.500L10.900 12.200L9 10.300L8.100 11.700Z" fill="#b4480c"/><g stroke="#c96a1e" stroke-width="1.150" stroke-linecap="round"><path d="M6.500 2.500L6.600 3.700M3.500 3.900L4.300 4.800M2.200 6.300L3.300 6.700M3.400 9.800L4.300 9M9.700 3.500L9.200 4.500"/></g></svg>
<span style="letter-spacing:-0.165px;left:203.60px;top:251.90px;font-size:11.8px;line-height:17px;color:#111827;font-weight:400;">Edge Case: Removing Item with Same Quantity as Added</span>
<svg style="left:503.40px;top:252.70px;" width="14.00" height="14.00" viewBox="0 0 22 22"><circle cx="11" cy="11" r="10.900" fill="#1c1c1c"/><path d="M4.600 4.200H13.800V17.900H9.300V8H4.600Z" fill="#fff"/><rect x="13.800" y="4.200" width="1.600" height="6.800" fill="#4f7fe0"/><rect x="16.100" y="4.200" width="1.400" height="4.200" fill="#fff"/></svg>
<svg style="left:20.45px;top:277.35px;" width="8.90" height="8.90" viewBox="-0.400 -0.400 10.800 10.800"><circle cx="5" cy="5" r="5" fill="#ef4444"/><rect x="2.400" y="4.200" width="5.200" height="1.600" rx="0.500" fill="#fff"/></svg>
<svg style="left:36.30px;top:275.40px;" width="11.20" height="12.40" viewBox="0 0 11.2 12.4"><rect x="0.900" y="2" width="9.400" height="9.700" rx="1" fill="none" stroke="#4b5563" stroke-width="1.100"/><path d="M3.300 2.900V1.800H4.500A1.150 1.150 0 0 1 6.700 1.800H7.900V2.900Z" fill="#fff" stroke="#4b5563" stroke-width="0.900" stroke-linejoin="round"/><g fill="#4b5563"><rect x="3" y="4.900" width="1.100" height="1.200"/><rect x="5" y="5" width="3.200" height="1"/><rect x="3" y="7.800" width="1.100" height="1.200"/><rect x="5" y="7.900" width="3.200" height="1"/><rect x="3.300" y="6" width="0.500" height="2"/></g></svg>
<span style="letter-spacing:-0.006px;left:54.80px;top:274.90px;font-size:9.9px;line-height:14px;color:#858c9a;font-weight:400;font-family:'DejaVu Sans Mono', 'Liberation Mono', monospace;">Shopping Cart @firs…</span>
<svg style="left:187.10px;top:275.15px;" width="13.70" height="13.70" viewBox="0 0 14 14"><rect width="14" height="14" rx="3.400" fill="#fef0c8"/><path d="M6.600 7.300L11 8.800L9.700 9.600L11.600 11.500L10.900 12.200L9 10.300L8.100 11.700Z" fill="#b4480c"/><g stroke="#c96a1e" stroke-width="1.150" stroke-linecap="round"><path d="M6.500 2.500L6.600 3.700M3.500 3.900L4.300 4.800M2.200 6.300L3.300 6.700M3.400 9.800L4.300 9M9.700 3.500L9.200 4.500"/></g></svg>
<span style="letter-spacing:-0.131px;left:203.60px;top:274.00px;font-size:11.8px;line-height:17px;color:#111827;font-weight:400;">Removing an Item from the Shopping Cart</span>
<svg style="left:425.50px;top:274.80px;" width="14.00" height="14.00" viewBox="0 0 22 22"><circle cx="11" cy="11" r="10.900" fill="#1c1c1c"/><path d="M4.600 4.200H13.800V17.900H9.300V8H4.600Z" fill="#fff"/><rect x="13.800" y="4.200" width="1.600" height="6.800" fill="#4f7fe0"/><rect x="16.100" y="4.200" width="1.400" height="4.200" fill="#fff"/></svg>
</div>
</div></body></html>
